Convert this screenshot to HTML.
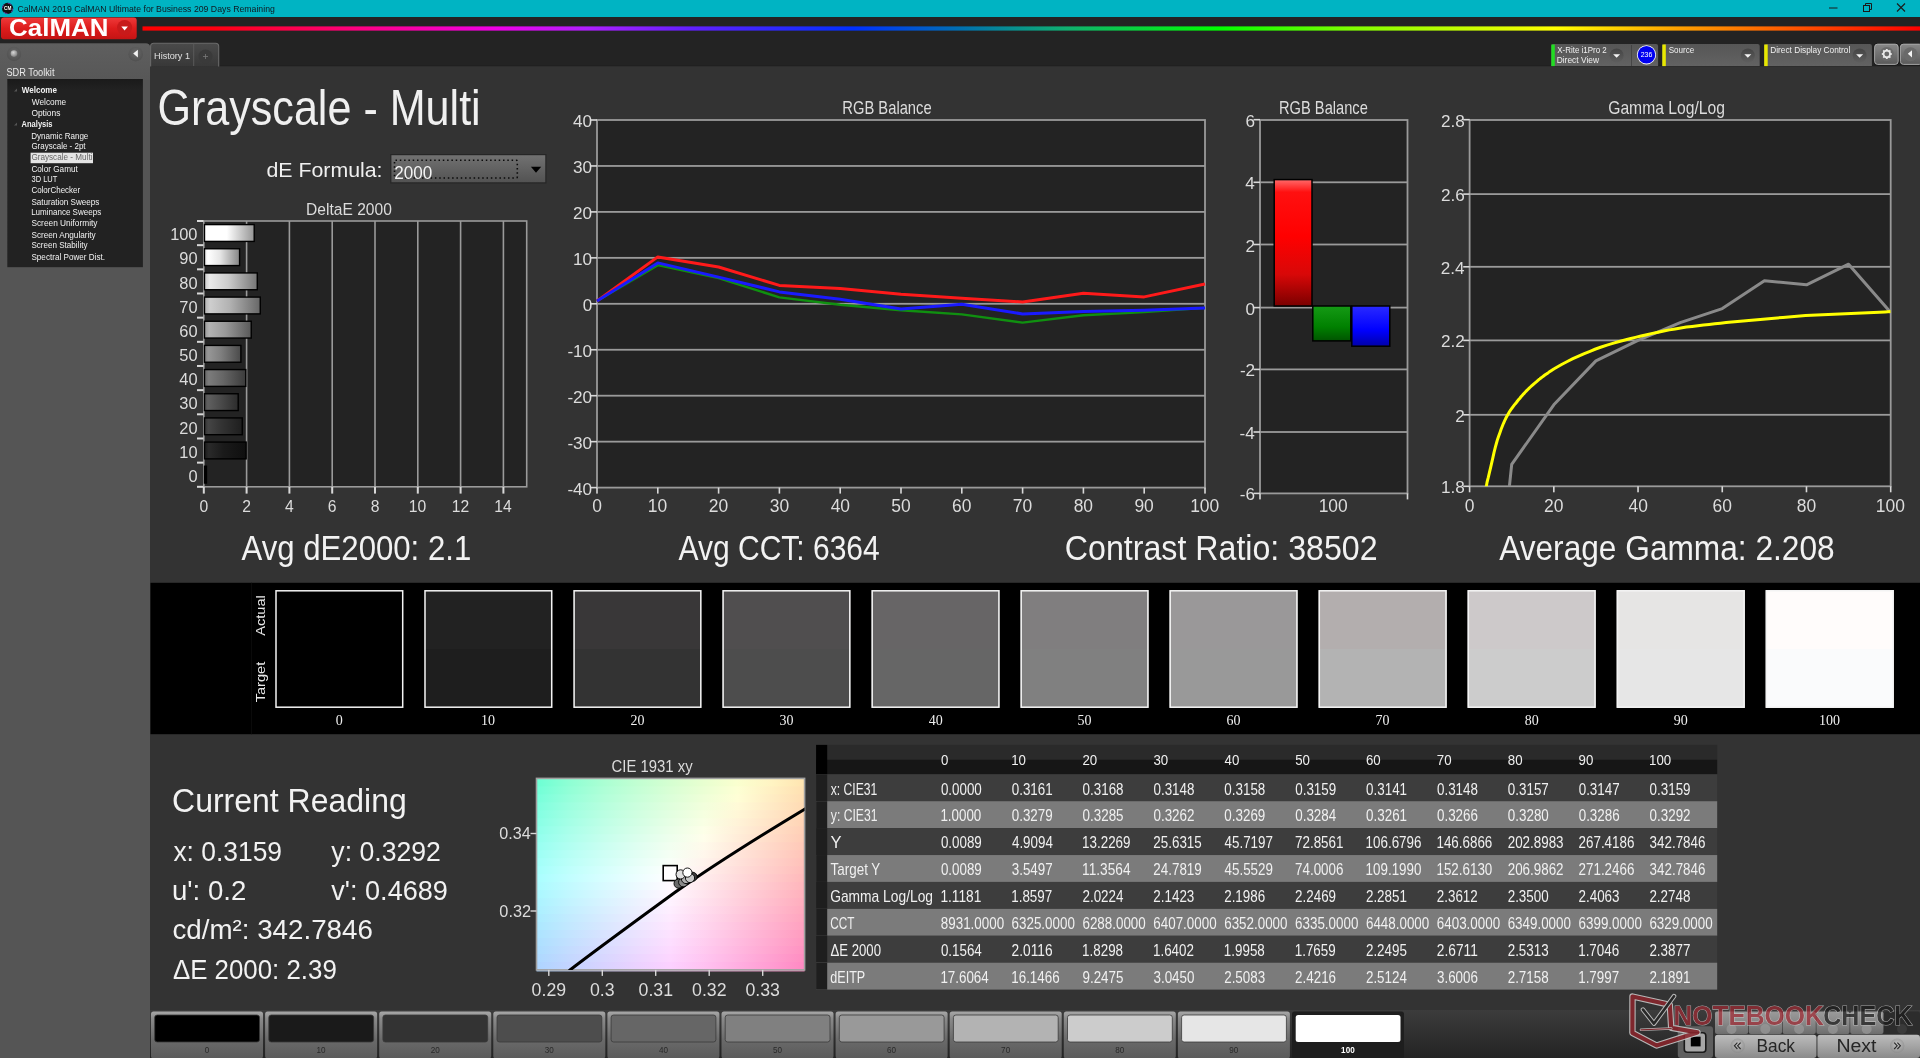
<!DOCTYPE html><html><head><meta charset="utf-8"><style>html,body{margin:0;padding:0;background:#333;}body{width:1920px;height:1058px;overflow:hidden;}svg{display:block;will-change:transform;font-family:"Liberation Sans", sans-serif;}</style></head><body><svg width="1920" height="1058" viewBox="0 0 1920 1058"><defs><linearGradient id="gRed" x1="0" y1="0" x2="0" y2="1"><stop offset="0" stop-color="#ee3a3a"/><stop offset="0.5" stop-color="#dd1c1c"/><stop offset="1" stop-color="#c41414"/></linearGradient><linearGradient id="gRainbow" gradientUnits="userSpaceOnUse" x1="142.5" y1="0" x2="1920" y2="0"><stop offset="0" stop-color="#ff0000"/><stop offset="0.04" stop-color="#ff0010"/><stop offset="0.12" stop-color="#ff0080"/><stop offset="0.20" stop-color="#f000e8"/><stop offset="0.25" stop-color="#b020ff"/><stop offset="0.31" stop-color="#6020ff"/><stop offset="0.40" stop-color="#0030ff"/><stop offset="0.46" stop-color="#0070b0"/><stop offset="0.52" stop-color="#10b070"/><stop offset="0.605" stop-color="#00ff00"/><stop offset="0.68" stop-color="#80ff00"/><stop offset="0.795" stop-color="#ffff00"/><stop offset="0.865" stop-color="#ffa000"/><stop offset="0.92" stop-color="#ff6000"/><stop offset="1" stop-color="#ff0000"/></linearGradient><linearGradient id="gSide" x1="0" y1="0" x2="0" y2="1"><stop offset="0" stop-color="#5f5f5f"/><stop offset="1" stop-color="#575757"/></linearGradient><radialGradient id="gBtnC" cx="0.5" cy="0.4" r="0.6"><stop offset="0" stop-color="#6a6a6a"/><stop offset="1" stop-color="#505050"/></radialGradient><radialGradient id="gBall" cx="0.4" cy="0.35" r="0.7"><stop offset="0" stop-color="#d8d8d8"/><stop offset="1" stop-color="#7a7a7a"/></radialGradient><linearGradient id="gTree" x1="0" y1="0" x2="0" y2="1"><stop offset="0" stop-color="#1a1a1a"/><stop offset="0.06" stop-color="#222222"/><stop offset="1" stop-color="#222222"/></linearGradient><linearGradient id="gTab" x1="0" y1="0" x2="0" y2="1"><stop offset="0" stop-color="#4a4a4a"/><stop offset="1" stop-color="#383838"/></linearGradient><linearGradient id="gTB" x1="0" y1="0" x2="0" y2="1"><stop offset="0" stop-color="#565656"/><stop offset="1" stop-color="#626262"/></linearGradient><linearGradient id="gDD" x1="0" y1="0" x2="0" y2="1"><stop offset="0" stop-color="#444444"/><stop offset="1" stop-color="#5e5e5e"/></linearGradient><linearGradient id="gGB" x1="0" y1="0" x2="0" y2="1"><stop offset="0" stop-color="#888"/><stop offset="1" stop-color="#5a5a5a"/></linearGradient><linearGradient id="gDrop" x1="0" y1="0" x2="0" y2="1"><stop offset="0" stop-color="#727272"/><stop offset="1" stop-color="#525252"/></linearGradient><linearGradient id="gB0" x1="0" y1="0" x2="1" y2="0"><stop offset="0" stop-color="rgb(0,0,0)"/><stop offset="0.1" stop-color="rgb(14,14,14)"/><stop offset="0.45" stop-color="rgb(0,0,0)"/><stop offset="1" stop-color="rgb(0,0,0)"/></linearGradient><linearGradient id="gB10" x1="0" y1="0" x2="1" y2="0"><stop offset="0" stop-color="rgb(26,26,26)"/><stop offset="0.1" stop-color="rgb(42,42,42)"/><stop offset="0.45" stop-color="rgb(26,26,26)"/><stop offset="1" stop-color="rgb(15,15,15)"/></linearGradient><linearGradient id="gB20" x1="0" y1="0" x2="1" y2="0"><stop offset="0" stop-color="rgb(51,51,51)"/><stop offset="0.1" stop-color="rgb(69,69,69)"/><stop offset="0.45" stop-color="rgb(51,51,51)"/><stop offset="1" stop-color="rgb(30,30,30)"/></linearGradient><linearGradient id="gB30" x1="0" y1="0" x2="1" y2="0"><stop offset="0" stop-color="rgb(76,76,76)"/><stop offset="0.1" stop-color="rgb(96,96,96)"/><stop offset="0.45" stop-color="rgb(76,76,76)"/><stop offset="1" stop-color="rgb(44,44,44)"/></linearGradient><linearGradient id="gB40" x1="0" y1="0" x2="1" y2="0"><stop offset="0" stop-color="rgb(102,102,102)"/><stop offset="0.1" stop-color="rgb(124,124,124)"/><stop offset="0.45" stop-color="rgb(102,102,102)"/><stop offset="1" stop-color="rgb(59,59,59)"/></linearGradient><linearGradient id="gB50" x1="0" y1="0" x2="1" y2="0"><stop offset="0" stop-color="rgb(127,127,127)"/><stop offset="0.1" stop-color="rgb(151,151,151)"/><stop offset="0.45" stop-color="rgb(127,127,127)"/><stop offset="1" stop-color="rgb(74,74,74)"/></linearGradient><linearGradient id="gB60" x1="0" y1="0" x2="1" y2="0"><stop offset="0" stop-color="rgb(153,153,153)"/><stop offset="0.1" stop-color="rgb(179,179,179)"/><stop offset="0.45" stop-color="rgb(153,153,153)"/><stop offset="1" stop-color="rgb(89,89,89)"/></linearGradient><linearGradient id="gB70" x1="0" y1="0" x2="1" y2="0"><stop offset="0" stop-color="rgb(178,178,178)"/><stop offset="0.1" stop-color="rgb(206,206,206)"/><stop offset="0.45" stop-color="rgb(178,178,178)"/><stop offset="1" stop-color="rgb(103,103,103)"/></linearGradient><linearGradient id="gB80" x1="0" y1="0" x2="1" y2="0"><stop offset="0" stop-color="rgb(204,204,204)"/><stop offset="0.1" stop-color="rgb(234,234,234)"/><stop offset="0.45" stop-color="rgb(204,204,204)"/><stop offset="1" stop-color="rgb(118,118,118)"/></linearGradient><linearGradient id="gB90" x1="0" y1="0" x2="1" y2="0"><stop offset="0" stop-color="rgb(229,229,229)"/><stop offset="0.1" stop-color="rgb(255,255,255)"/><stop offset="0.45" stop-color="rgb(229,229,229)"/><stop offset="1" stop-color="rgb(133,133,133)"/></linearGradient><linearGradient id="gB100" x1="0" y1="0" x2="1" y2="0"><stop offset="0" stop-color="rgb(255,255,255)"/><stop offset="0.1" stop-color="rgb(255,255,255)"/><stop offset="0.45" stop-color="rgb(255,255,255)"/><stop offset="1" stop-color="rgb(148,148,148)"/></linearGradient><linearGradient id="gBR" x1="0" y1="0" x2="0" y2="1"><stop offset="0" stop-color="#ff6a6a"/><stop offset="0.1" stop-color="#ff1010"/><stop offset="0.45" stop-color="#ff0000"/><stop offset="0.75" stop-color="#d80808"/><stop offset="1" stop-color="#7a0000"/></linearGradient><linearGradient id="gBG" x1="0" y1="0" x2="0" y2="1"><stop offset="0" stop-color="#159a15"/><stop offset="0.6" stop-color="#008000"/><stop offset="1" stop-color="#005400"/></linearGradient><linearGradient id="gBB" x1="0" y1="0" x2="0" y2="1"><stop offset="0" stop-color="#2a2aff"/><stop offset="0.6" stop-color="#0000ff"/><stop offset="1" stop-color="#0000a8"/></linearGradient><clipPath id="cpG"><rect x="1469.6" y="120.0" width="421.1" height="366.3"/></clipPath><linearGradient id="gC0" x1="0" y1="0" x2="1" y2="0"><stop offset="0.000" stop-color="#6cffd4"/><stop offset="0.125" stop-color="#8fffd4"/><stop offset="0.250" stop-color="#aaffd3"/><stop offset="0.375" stop-color="#c1ffd2"/><stop offset="0.500" stop-color="#d5ffd1"/><stop offset="0.625" stop-color="#e8ffd0"/><stop offset="0.750" stop-color="#faffcf"/><stop offset="0.875" stop-color="#fff4c3"/><stop offset="1.000" stop-color="#ffe4b0"/></linearGradient><linearGradient id="gC1" x1="0" y1="0" x2="1" y2="0"><stop offset="0.000" stop-color="#72ffd8"/><stop offset="0.125" stop-color="#93ffd7"/><stop offset="0.250" stop-color="#aeffd7"/><stop offset="0.375" stop-color="#c4ffd6"/><stop offset="0.500" stop-color="#d9ffd5"/><stop offset="0.625" stop-color="#ebffd4"/><stop offset="0.750" stop-color="#fdffd4"/><stop offset="0.875" stop-color="#fff0c3"/><stop offset="1.000" stop-color="#ffe0b1"/></linearGradient><linearGradient id="gC2" x1="0" y1="0" x2="1" y2="0"><stop offset="0.000" stop-color="#78ffdc"/><stop offset="0.125" stop-color="#98ffdb"/><stop offset="0.250" stop-color="#b2ffda"/><stop offset="0.375" stop-color="#c8ffda"/><stop offset="0.500" stop-color="#dcffd9"/><stop offset="0.625" stop-color="#efffd8"/><stop offset="0.750" stop-color="#fffed6"/><stop offset="0.875" stop-color="#ffedc4"/><stop offset="1.000" stop-color="#ffddb2"/></linearGradient><linearGradient id="gC3" x1="0" y1="0" x2="1" y2="0"><stop offset="0.000" stop-color="#7effdf"/><stop offset="0.125" stop-color="#9dffdf"/><stop offset="0.250" stop-color="#b6ffde"/><stop offset="0.375" stop-color="#ccffde"/><stop offset="0.500" stop-color="#e0ffdd"/><stop offset="0.625" stop-color="#f2ffdc"/><stop offset="0.750" stop-color="#fffad7"/><stop offset="0.875" stop-color="#ffeac5"/><stop offset="1.000" stop-color="#ffdab3"/></linearGradient><linearGradient id="gC4" x1="0" y1="0" x2="1" y2="0"><stop offset="0.000" stop-color="#83ffe3"/><stop offset="0.125" stop-color="#a1ffe2"/><stop offset="0.250" stop-color="#baffe2"/><stop offset="0.375" stop-color="#d0ffe1"/><stop offset="0.500" stop-color="#e3ffe1"/><stop offset="0.625" stop-color="#f6ffe0"/><stop offset="0.750" stop-color="#fff7d7"/><stop offset="0.875" stop-color="#ffe6c6"/><stop offset="1.000" stop-color="#ffd6b4"/></linearGradient><linearGradient id="gC5" x1="0" y1="0" x2="1" y2="0"><stop offset="0.000" stop-color="#88ffe6"/><stop offset="0.125" stop-color="#a5ffe6"/><stop offset="0.250" stop-color="#beffe6"/><stop offset="0.375" stop-color="#d3ffe5"/><stop offset="0.500" stop-color="#e7ffe5"/><stop offset="0.625" stop-color="#f9ffe4"/><stop offset="0.750" stop-color="#fff3d8"/><stop offset="0.875" stop-color="#ffe3c6"/><stop offset="1.000" stop-color="#ffd3b5"/></linearGradient><linearGradient id="gC6" x1="0" y1="0" x2="1" y2="0"><stop offset="0.000" stop-color="#8dffea"/><stop offset="0.125" stop-color="#aaffea"/><stop offset="0.250" stop-color="#c2ffe9"/><stop offset="0.375" stop-color="#d7ffe9"/><stop offset="0.500" stop-color="#ebffe9"/><stop offset="0.625" stop-color="#fdffe8"/><stop offset="0.750" stop-color="#fff0d9"/><stop offset="0.875" stop-color="#ffdfc7"/><stop offset="1.000" stop-color="#ffcfb6"/></linearGradient><linearGradient id="gC7" x1="0" y1="0" x2="1" y2="0"><stop offset="0.000" stop-color="#92ffee"/><stop offset="0.125" stop-color="#aeffed"/><stop offset="0.250" stop-color="#c6ffed"/><stop offset="0.375" stop-color="#dbffed"/><stop offset="0.500" stop-color="#eeffed"/><stop offset="0.625" stop-color="#fffeeb"/><stop offset="0.750" stop-color="#ffedd9"/><stop offset="0.875" stop-color="#ffdcc8"/><stop offset="1.000" stop-color="#ffccb6"/></linearGradient><linearGradient id="gC8" x1="0" y1="0" x2="1" y2="0"><stop offset="0.000" stop-color="#97fff1"/><stop offset="0.125" stop-color="#b2fff1"/><stop offset="0.250" stop-color="#cafff1"/><stop offset="0.375" stop-color="#dffff1"/><stop offset="0.500" stop-color="#f2fff0"/><stop offset="0.625" stop-color="#fffaeb"/><stop offset="0.750" stop-color="#ffe9da"/><stop offset="0.875" stop-color="#ffd8c8"/><stop offset="1.000" stop-color="#ffc8b7"/></linearGradient><linearGradient id="gC9" x1="0" y1="0" x2="1" y2="0"><stop offset="0.000" stop-color="#9cfff5"/><stop offset="0.125" stop-color="#b7fff5"/><stop offset="0.250" stop-color="#cefff5"/><stop offset="0.375" stop-color="#e2fff4"/><stop offset="0.500" stop-color="#f5fff4"/><stop offset="0.625" stop-color="#fff7ec"/><stop offset="0.750" stop-color="#ffe5da"/><stop offset="0.875" stop-color="#ffd5c9"/><stop offset="1.000" stop-color="#ffc4b8"/></linearGradient><linearGradient id="gC10" x1="0" y1="0" x2="1" y2="0"><stop offset="0.000" stop-color="#a1fff9"/><stop offset="0.125" stop-color="#bbfff8"/><stop offset="0.250" stop-color="#d1fff8"/><stop offset="0.375" stop-color="#e6fff8"/><stop offset="0.500" stop-color="#f9fff8"/><stop offset="0.625" stop-color="#fff3ec"/><stop offset="0.750" stop-color="#ffe2db"/><stop offset="0.875" stop-color="#ffd1ca"/><stop offset="1.000" stop-color="#ffc1b9"/></linearGradient><linearGradient id="gC11" x1="0" y1="0" x2="1" y2="0"><stop offset="0.000" stop-color="#a5fffc"/><stop offset="0.125" stop-color="#bffffc"/><stop offset="0.250" stop-color="#d5fffc"/><stop offset="0.375" stop-color="#eafffc"/><stop offset="0.500" stop-color="#fdfffc"/><stop offset="0.625" stop-color="#fff0ed"/><stop offset="0.750" stop-color="#ffdedb"/><stop offset="0.875" stop-color="#ffceca"/><stop offset="1.000" stop-color="#ffbdba"/></linearGradient><linearGradient id="gC12" x1="0" y1="0" x2="1" y2="0"><stop offset="0.000" stop-color="#a9feff"/><stop offset="0.125" stop-color="#c2feff"/><stop offset="0.250" stop-color="#d8feff"/><stop offset="0.375" stop-color="#ecfeff"/><stop offset="0.500" stop-color="#fffeff"/><stop offset="0.625" stop-color="#ffeced"/><stop offset="0.750" stop-color="#ffdbdc"/><stop offset="0.875" stop-color="#ffcacb"/><stop offset="1.000" stop-color="#ffb9ba"/></linearGradient><linearGradient id="gC13" x1="0" y1="0" x2="1" y2="0"><stop offset="0.000" stop-color="#aafbff"/><stop offset="0.125" stop-color="#c2faff"/><stop offset="0.250" stop-color="#d8faff"/><stop offset="0.375" stop-color="#ecfaff"/><stop offset="0.500" stop-color="#fffaff"/><stop offset="0.625" stop-color="#ffe8ed"/><stop offset="0.750" stop-color="#ffd7dc"/><stop offset="0.875" stop-color="#ffc6cc"/><stop offset="1.000" stop-color="#ffb5bb"/></linearGradient><linearGradient id="gC14" x1="0" y1="0" x2="1" y2="0"><stop offset="0.000" stop-color="#aaf7ff"/><stop offset="0.125" stop-color="#c2f7ff"/><stop offset="0.250" stop-color="#d8f7ff"/><stop offset="0.375" stop-color="#ecf6ff"/><stop offset="0.500" stop-color="#fff6ff"/><stop offset="0.625" stop-color="#ffe5ee"/><stop offset="0.750" stop-color="#ffd3dd"/><stop offset="0.875" stop-color="#ffc2cc"/><stop offset="1.000" stop-color="#ffb1bc"/></linearGradient><linearGradient id="gC15" x1="0" y1="0" x2="1" y2="0"><stop offset="0.000" stop-color="#aaf3ff"/><stop offset="0.125" stop-color="#c3f3ff"/><stop offset="0.250" stop-color="#d8f3ff"/><stop offset="0.375" stop-color="#ecf2ff"/><stop offset="0.500" stop-color="#fef2ff"/><stop offset="0.625" stop-color="#ffe1ee"/><stop offset="0.750" stop-color="#ffd0dd"/><stop offset="0.875" stop-color="#ffbecd"/><stop offset="1.000" stop-color="#ffadbd"/></linearGradient><linearGradient id="gC16" x1="0" y1="0" x2="1" y2="0"><stop offset="0.000" stop-color="#abf0ff"/><stop offset="0.125" stop-color="#c3efff"/><stop offset="0.250" stop-color="#d8efff"/><stop offset="0.375" stop-color="#ecefff"/><stop offset="0.500" stop-color="#feeeff"/><stop offset="0.625" stop-color="#ffddef"/><stop offset="0.750" stop-color="#ffccde"/><stop offset="0.875" stop-color="#ffbace"/><stop offset="1.000" stop-color="#ffa9bd"/></linearGradient><linearGradient id="gC17" x1="0" y1="0" x2="1" y2="0"><stop offset="0.000" stop-color="#abecff"/><stop offset="0.125" stop-color="#c3ebff"/><stop offset="0.250" stop-color="#d8ebff"/><stop offset="0.375" stop-color="#ecebff"/><stop offset="0.500" stop-color="#feeaff"/><stop offset="0.625" stop-color="#ffd9ef"/><stop offset="0.750" stop-color="#ffc8de"/><stop offset="0.875" stop-color="#ffb6ce"/><stop offset="1.000" stop-color="#ffa5be"/></linearGradient><linearGradient id="gC18" x1="0" y1="0" x2="1" y2="0"><stop offset="0.000" stop-color="#abe8ff"/><stop offset="0.125" stop-color="#c3e8ff"/><stop offset="0.250" stop-color="#d8e7ff"/><stop offset="0.375" stop-color="#ece7ff"/><stop offset="0.500" stop-color="#fee6ff"/><stop offset="0.625" stop-color="#ffd6ef"/><stop offset="0.750" stop-color="#ffc4df"/><stop offset="0.875" stop-color="#ffb2cf"/><stop offset="1.000" stop-color="#ffa1bf"/></linearGradient><linearGradient id="gC19" x1="0" y1="0" x2="1" y2="0"><stop offset="0.000" stop-color="#ace4ff"/><stop offset="0.125" stop-color="#c3e4ff"/><stop offset="0.250" stop-color="#d8e3ff"/><stop offset="0.375" stop-color="#ebe3ff"/><stop offset="0.500" stop-color="#fde2ff"/><stop offset="0.625" stop-color="#ffd2f0"/><stop offset="0.750" stop-color="#ffc0df"/><stop offset="0.875" stop-color="#ffaecf"/><stop offset="1.000" stop-color="#ff9cbf"/></linearGradient><linearGradient id="gC20" x1="0" y1="0" x2="1" y2="0"><stop offset="0.000" stop-color="#ace0ff"/><stop offset="0.125" stop-color="#c3e0ff"/><stop offset="0.250" stop-color="#d8dfff"/><stop offset="0.375" stop-color="#ebdfff"/><stop offset="0.500" stop-color="#fddeff"/><stop offset="0.625" stop-color="#ffcef0"/><stop offset="0.750" stop-color="#ffbce0"/><stop offset="0.875" stop-color="#ffaad0"/><stop offset="1.000" stop-color="#ff98c0"/></linearGradient><linearGradient id="gC21" x1="0" y1="0" x2="1" y2="0"><stop offset="0.000" stop-color="#acddff"/><stop offset="0.125" stop-color="#c4dcff"/><stop offset="0.250" stop-color="#d8dbff"/><stop offset="0.375" stop-color="#ebdbff"/><stop offset="0.500" stop-color="#fddaff"/><stop offset="0.625" stop-color="#ffcaf0"/><stop offset="0.750" stop-color="#ffb8e0"/><stop offset="0.875" stop-color="#ffa6d0"/><stop offset="1.000" stop-color="#ff93c1"/></linearGradient><linearGradient id="gC22" x1="0" y1="0" x2="1" y2="0"><stop offset="0.000" stop-color="#add9ff"/><stop offset="0.125" stop-color="#c4d8ff"/><stop offset="0.250" stop-color="#d8d7ff"/><stop offset="0.375" stop-color="#ebd6ff"/><stop offset="0.500" stop-color="#fdd6ff"/><stop offset="0.625" stop-color="#ffc6f1"/><stop offset="0.750" stop-color="#ffb4e1"/><stop offset="0.875" stop-color="#ffa1d1"/><stop offset="1.000" stop-color="#ff8ec1"/></linearGradient><linearGradient id="gC23" x1="0" y1="0" x2="1" y2="0"><stop offset="0.000" stop-color="#add5ff"/><stop offset="0.125" stop-color="#c4d4ff"/><stop offset="0.250" stop-color="#d8d3ff"/><stop offset="0.375" stop-color="#ebd2ff"/><stop offset="0.500" stop-color="#fcd1ff"/><stop offset="0.625" stop-color="#ffc2f1"/><stop offset="0.750" stop-color="#ffafe1"/><stop offset="0.875" stop-color="#ff9dd2"/><stop offset="1.000" stop-color="#ff89c2"/></linearGradient><clipPath id="cpC"><rect x="536.5" y="778.4" width="268.1" height="191.5"/></clipPath><linearGradient id="gBot" x1="0" y1="0" x2="0" y2="1"><stop offset="0" stop-color="#a8a8a8"/><stop offset="0.15" stop-color="#8a8a8a"/><stop offset="0.6" stop-color="#6a6a6a"/><stop offset="1" stop-color="#5a5a5a"/></linearGradient><linearGradient id="gBotBar" x1="0" y1="0" x2="0" y2="1"><stop offset="0" stop-color="#3c3c3c"/><stop offset="1" stop-color="#242424"/></linearGradient><linearGradient id="gNav" x1="0" y1="0" x2="0" y2="1"><stop offset="0" stop-color="#bcbcbc"/><stop offset="0.5" stop-color="#a4a4a4"/><stop offset="1" stop-color="#8a8a8a"/></linearGradient><linearGradient id="gSm" x1="0" y1="0" x2="0" y2="1"><stop offset="0" stop-color="#9a9a9a"/><stop offset="0.5" stop-color="#888888"/><stop offset="1" stop-color="#6e6e6e"/></linearGradient><radialGradient id="gNC" cx="0.5" cy="0.4" r="0.6"><stop offset="0" stop-color="#c4c4c4"/><stop offset="1" stop-color="#8e8e8e"/></radialGradient></defs><rect x="0" y="0" width="1920" height="1058" fill="#333333"/>
<rect x="0" y="0" width="1920" height="17" fill="#00b4c3"/>
<circle cx="7.6" cy="8.4" r="5.6" fill="#111"/>
<circle cx="7.6" cy="8.4" r="5.2" fill="none" stroke="#7a3bbd" stroke-width="0.8" stroke-dasharray="4 4"/>
<text x="4.01" y="10.30" font-size="5.23" fill="#fff" font-weight="bold" textLength="7.31" lengthAdjust="spacingAndGlyphs" >CM</text>
<text x="17.46" y="11.70" font-size="9.16" fill="#101820" textLength="257.41" lengthAdjust="spacingAndGlyphs" >CalMAN 2019 CalMAN Ultimate for Business 209 Days Remaining</text>
<rect x="1829" y="7.5" width="8.5" height="1" fill="#1a1a1a"/>
<rect x="1863.5" y="5.5" width="6" height="6" fill="none" stroke="#1a1a1a" stroke-width="1"/>
<path d="M1865.5 5.5 V3.5 H1871.5 V9.5 H1869.5" fill="none" stroke="#1a1a1a" stroke-width="1"/>
<path d="M1897 3.5 L1905 11.5 M1905 3.5 L1897 11.5" stroke="#1a1a1a" stroke-width="1.1"/>
<rect x="0" y="17" width="1920" height="49" fill="#232323"/><rect x="150" y="65.5" width="1770" height="1" fill="#1e1e1e"/><rect x="150" y="66.5" width="1770" height="991.5" fill="#333333"/>
<rect x="1" y="17.5" width="135.7" height="21.8" rx="3" fill="url(#gRed)"/>
<text x="9.14" y="36.20" font-size="23.98" fill="#ffffff" font-weight="bold" textLength="99.21" lengthAdjust="spacingAndGlyphs" >CalMAN</text>
<circle cx="124.6" cy="27.6" r="7.6" fill="#c81a1a"/>
<path d="M121.3 26.6 H127.9 L124.6 30.4 Z" fill="#fff"/>
<rect x="142.5" y="26.4" width="1777.5" height="4.2" fill="url(#gRainbow)"/>
<path d="M0 43.5 H146 Q150 43.5 150 47.5 V1058 H0 Z" fill="#555555"/>
<path d="M0 43.5 H146 Q150 43.5 150 47.5 V80 H0 Z" fill="url(#gSide)"/>
<circle cx="14" cy="54" r="7.2" fill="url(#gBtnC)"/>
<circle cx="14" cy="53.6" r="3.3" fill="url(#gBall)"/>
<circle cx="135.7" cy="54.2" r="7.3" fill="url(#gBtnC)"/>
<path d="M137.9 49.8 V57.4 L133.2 53.6 Z" fill="#f4f4f4"/>
<text x="6.39" y="75.80" font-size="10.76" fill="#e8e8e8" textLength="48.08" lengthAdjust="spacingAndGlyphs" >SDR Toolkit</text>
<rect x="7.3" y="79" width="135.6" height="188.2" fill="url(#gTree)"/>
<rect x="30.6" y="152.7" width="62.4" height="10.5" fill="#e4e4e4"/>
<text x="21.79" y="92.60" font-size="8.87" fill="#f2f2f2" font-weight="bold" textLength="35.18" lengthAdjust="spacingAndGlyphs" >Welcome</text>
<text x="31.76" y="104.60" font-size="8.87" fill="#f2f2f2" textLength="34.40" lengthAdjust="spacingAndGlyphs" >Welcome</text>
<text x="31.40" y="115.50" font-size="8.87" fill="#f2f2f2" textLength="29.00" lengthAdjust="spacingAndGlyphs" >Options</text>
<text x="21.61" y="126.60" font-size="8.87" fill="#f2f2f2" font-weight="bold" textLength="30.90" lengthAdjust="spacingAndGlyphs" >Analysis</text>
<text x="31.14" y="138.70" font-size="8.87" fill="#f2f2f2" textLength="57.22" lengthAdjust="spacingAndGlyphs" >Dynamic Range</text>
<text x="31.40" y="149.30" font-size="8.87" fill="#f2f2f2" textLength="54.16" lengthAdjust="spacingAndGlyphs" >Grayscale - 2pt</text>
<text x="31.39" y="160.20" font-size="8.87" fill="#666666" textLength="61.16" lengthAdjust="spacingAndGlyphs" >Grayscale - Multi</text>
<text x="31.38" y="171.50" font-size="8.87" fill="#f2f2f2" textLength="46.48" lengthAdjust="spacingAndGlyphs" >Color Gamut</text>
<text x="31.51" y="182.20" font-size="8.87" fill="#f2f2f2" textLength="25.86" lengthAdjust="spacingAndGlyphs" >3D LUT</text>
<text x="31.39" y="193.30" font-size="8.87" fill="#f2f2f2" textLength="48.84" lengthAdjust="spacingAndGlyphs" >ColorChecker</text>
<text x="31.43" y="204.90" font-size="8.87" fill="#f2f2f2" textLength="67.96" lengthAdjust="spacingAndGlyphs" >Saturation Sweeps</text>
<text x="31.14" y="215.30" font-size="8.87" fill="#f2f2f2" textLength="70.05" lengthAdjust="spacingAndGlyphs" >Luminance Sweeps</text>
<text x="31.42" y="226.40" font-size="8.87" fill="#f2f2f2" textLength="66.09" lengthAdjust="spacingAndGlyphs" >Screen Uniformity</text>
<text x="31.43" y="237.80" font-size="8.87" fill="#f2f2f2" textLength="64.29" lengthAdjust="spacingAndGlyphs" >Screen Angularity</text>
<text x="31.43" y="248.00" font-size="8.87" fill="#f2f2f2" textLength="56.08" lengthAdjust="spacingAndGlyphs" >Screen Stability</text>
<text x="31.43" y="259.50" font-size="8.87" fill="#f2f2f2" textLength="73.61" lengthAdjust="spacingAndGlyphs" >Spectral Power Dist.</text>
<path d="M14 91.5 L17 88.5 V91.5 Z" fill="#555"/>
<path d="M14 125.5 L17 122.5 V125.5 Z" fill="#555"/>
<path d="M150.6 66.5 V46.5 Q150.6 43.3 153.8 43.3 H215.5 Q218.7 43.3 218.7 46.5 V66.5 Z" fill="url(#gTab)"/>
<path d="M150.6 66.5 V46.5 Q150.6 43.3 153.8 43.3 H215.5 Q218.7 43.3 218.7 46.5 V66.5" fill="none" stroke="#6a6a6a" stroke-width="1.1"/>
<rect x="193.2" y="43.5" width="1" height="22.5" fill="#5a5a5a"/>
<text x="154.05" y="58.70" font-size="8.72" fill="#e0e0e0" textLength="35.99" lengthAdjust="spacingAndGlyphs" >History 1</text>
<circle cx="205.5" cy="56.5" r="7" fill="#3a3a3a"/>
<path d="M205.5 54 V59 M203 56.5 H208" stroke="#777" stroke-width="0.8"/>
<path d="M1551.3 66.1 V46 Q1551.3 43.9 1553.3 43.9 H1656.1 Q1658.1 43.9 1658.1 46 V66.1 Z" fill="url(#gTB)"/><rect x="1551.3" y="44.5" width="3.5" height="21.6" fill="#22dd22"/>
<text x="1557.22" y="52.80" font-size="8.58" fill="#f0f0f0" textLength="49.48" lengthAdjust="spacingAndGlyphs" >X-Rite i1Pro 2</text>
<text x="1556.71" y="63.10" font-size="8.58" fill="#f0f0f0" textLength="42.27" lengthAdjust="spacingAndGlyphs" >Direct View</text>
<circle cx="1616.6" cy="55.5" r="7" fill="url(#gDD)"/><path d="M1613.1 54.2 H1620.1 L1616.6 57.8 Z" fill="#f4f4f4"/>
<rect x="1631" y="45" width="0.8" height="21" fill="#404040"/>
<circle cx="1646.5" cy="54.8" r="9.6" fill="#ffffff"/><circle cx="1646.5" cy="54.8" r="8.8" fill="#0000f0"/>
<text x="1640.65" y="57.20" font-size="6.69" fill="#ffffff" textLength="11.66" lengthAdjust="spacingAndGlyphs" >236</text>
<path d="M1662.3 66.1 V46 Q1662.3 43.9 1664.3 43.9 H1757.7 Q1759.7 43.9 1759.7 46 V66.1 Z" fill="url(#gTB)"/><rect x="1662.3" y="44.5" width="3.5" height="21.6" fill="#e8e800"/>
<text x="1668.63" y="52.80" font-size="8.58" fill="#f0f0f0" textLength="25.52" lengthAdjust="spacingAndGlyphs" >Source</text>
<circle cx="1747.8" cy="55.5" r="7" fill="url(#gDD)"/><path d="M1744.3 54.2 H1751.3 L1747.8 57.8 Z" fill="#f4f4f4"/>
<path d="M1764.2 66.1 V46 Q1764.2 43.9 1766.2 43.9 H1869.9 Q1871.9 43.9 1871.9 46 V66.1 Z" fill="url(#gTB)"/><rect x="1764.2" y="44.5" width="3.5" height="21.6" fill="#e8e800"/>
<text x="1770.32" y="52.80" font-size="8.58" fill="#f0f0f0" textLength="79.93" lengthAdjust="spacingAndGlyphs" >Direct Display Control</text>
<circle cx="1859.6" cy="55.5" r="7" fill="url(#gDD)"/><path d="M1856.1 54.2 H1863.1 L1859.6 57.8 Z" fill="#f4f4f4"/>
<rect x="1873.8" y="43.3" width="25.2" height="21.9" rx="3.5" fill="#111"/>
<rect x="1899.6" y="43.3" width="23" height="21.9" rx="3.5" fill="#111"/>
<rect x="1874.6" y="44.1" width="23.6" height="20.3" rx="3" fill="url(#gGB)" stroke="#b0b0b0" stroke-width="0.9"/>
<rect x="1900.4" y="44.1" width="22" height="20.3" rx="3" fill="url(#gGB)" stroke="#b0b0b0" stroke-width="0.9"/>
<circle cx="1886.8" cy="54.0" r="7.0" fill="#6a6a6a"/>
<rect x="1885.9" y="49.0" width="1.8" height="2.2" fill="#e8e8e8" transform="rotate(0 1886.8 54.0)"/><rect x="1885.9" y="49.0" width="1.8" height="2.2" fill="#e8e8e8" transform="rotate(45 1886.8 54.0)"/><rect x="1885.9" y="49.0" width="1.8" height="2.2" fill="#e8e8e8" transform="rotate(90 1886.8 54.0)"/><rect x="1885.9" y="49.0" width="1.8" height="2.2" fill="#e8e8e8" transform="rotate(135 1886.8 54.0)"/><rect x="1885.9" y="49.0" width="1.8" height="2.2" fill="#e8e8e8" transform="rotate(180 1886.8 54.0)"/><rect x="1885.9" y="49.0" width="1.8" height="2.2" fill="#e8e8e8" transform="rotate(225 1886.8 54.0)"/><rect x="1885.9" y="49.0" width="1.8" height="2.2" fill="#e8e8e8" transform="rotate(270 1886.8 54.0)"/><rect x="1885.9" y="49.0" width="1.8" height="2.2" fill="#e8e8e8" transform="rotate(315 1886.8 54.0)"/><circle cx="1886.8" cy="54.0" r="3.3" fill="none" stroke="#e8e8e8" stroke-width="1.7"/>
<circle cx="1910.5" cy="54.3" r="7.0" fill="#6a6a6a"/><path d="M1912 50.2 V57.4 L1907.8 53.8 Z" fill="#f4f4f4"/>
<text x="157.43" y="124.80" font-size="50.87" fill="#f0f0f0" textLength="323.27" lengthAdjust="spacingAndGlyphs" >Grayscale - Multi</text>
<text x="266.40" y="177.40" font-size="20.78" fill="#f0f0f0" textLength="116.14" lengthAdjust="spacingAndGlyphs" >dE Formula:</text>
<rect x="390.8" y="154.6" width="155.1" height="28.3" fill="url(#gDrop)" stroke="#262626" stroke-width="1.2"/>
<rect x="394.5" y="160.2" width="122.8" height="17.8" rx="1" fill="none" stroke="#0a0a0a" stroke-width="1.6" stroke-dasharray="1.5 2.8"/>
<text x="394.14" y="178.50" font-size="19.19" fill="#f4f4f4" textLength="38.03" lengthAdjust="spacingAndGlyphs" >2000</text>
<path d="M530.9 166.7 H541.2 L536 172.8 Z" fill="#000"/>
<text x="306.12" y="215.20" font-size="16.86" fill="#dcdcdc" textLength="85.69" lengthAdjust="spacingAndGlyphs" >DeltaE 2000</text>
<rect x="203.8" y="221.0" width="322.90" height="265.80" fill="#232323"/><rect x="203.8" y="221.0" width="322.90" height="265.80" fill="none" stroke="#9a9a9a" stroke-width="1.6"/>
<rect x="245.80" y="221.0" width="1.6" height="265.8" fill="#9a9a9a"/>
<rect x="288.60" y="221.0" width="1.6" height="265.8" fill="#9a9a9a"/>
<rect x="331.40" y="221.0" width="1.6" height="265.8" fill="#9a9a9a"/>
<rect x="374.20" y="221.0" width="1.6" height="265.8" fill="#9a9a9a"/>
<rect x="417.00" y="221.0" width="1.6" height="265.8" fill="#9a9a9a"/>
<rect x="459.80" y="221.0" width="1.6" height="265.8" fill="#9a9a9a"/>
<rect x="502.60" y="221.0" width="1.6" height="265.8" fill="#9a9a9a"/>
<rect x="197" y="220.00" width="6.5" height="2.0" fill="#d8d8d8"/>
<rect x="197" y="244.16" width="6.5" height="2.0" fill="#d8d8d8"/>
<rect x="197" y="268.33" width="6.5" height="2.0" fill="#d8d8d8"/>
<rect x="197" y="292.49" width="6.5" height="2.0" fill="#d8d8d8"/>
<rect x="197" y="316.65" width="6.5" height="2.0" fill="#d8d8d8"/>
<rect x="197" y="340.82" width="6.5" height="2.0" fill="#d8d8d8"/>
<rect x="197" y="364.98" width="6.5" height="2.0" fill="#d8d8d8"/>
<rect x="197" y="389.15" width="6.5" height="2.0" fill="#d8d8d8"/>
<rect x="197" y="413.31" width="6.5" height="2.0" fill="#d8d8d8"/>
<rect x="197" y="437.47" width="6.5" height="2.0" fill="#d8d8d8"/>
<rect x="197" y="461.64" width="6.5" height="2.0" fill="#d8d8d8"/>
<rect x="197" y="485.80" width="6.5" height="2.0" fill="#d8d8d8"/>
<rect x="202.80" y="486.8" width="2.0" height="6.8" fill="#d8d8d8"/>
<text x="199.43" y="511.60" font-size="15.70" fill="#dcdcdc" >0</text>
<rect x="245.60" y="486.8" width="2.0" height="6.8" fill="#d8d8d8"/>
<text x="242.23" y="511.60" font-size="15.70" fill="#dcdcdc" >2</text>
<rect x="288.40" y="486.8" width="2.0" height="6.8" fill="#d8d8d8"/>
<text x="285.08" y="511.60" font-size="15.70" fill="#dcdcdc" >4</text>
<rect x="331.20" y="486.8" width="2.0" height="6.8" fill="#d8d8d8"/>
<text x="327.78" y="511.60" font-size="15.70" fill="#dcdcdc" >6</text>
<rect x="374.00" y="486.8" width="2.0" height="6.8" fill="#d8d8d8"/>
<text x="370.63" y="511.60" font-size="15.70" fill="#dcdcdc" >8</text>
<rect x="416.80" y="486.8" width="2.0" height="6.8" fill="#d8d8d8"/>
<text x="408.78" y="511.60" font-size="15.70" fill="#dcdcdc" >10</text>
<rect x="459.60" y="486.8" width="2.0" height="6.8" fill="#d8d8d8"/>
<text x="451.67" y="511.60" font-size="15.70" fill="#dcdcdc" >12</text>
<rect x="502.40" y="486.8" width="2.0" height="6.8" fill="#d8d8d8"/>
<text x="494.30" y="511.60" font-size="15.70" fill="#dcdcdc" >14</text>
<text x="188.41" y="481.94" font-size="16.42" fill="#dcdcdc" >0</text>
<rect x="204.50" y="466.24" width="1.95" height="16.8" fill="url(#gB0)" stroke="#000" stroke-width="1.4"/>
<text x="179.27" y="457.77" font-size="16.42" fill="#dcdcdc" >10</text>
<rect x="204.50" y="442.07" width="41.65" height="16.8" fill="url(#gB10)" stroke="#000" stroke-width="1.4"/>
<text x="179.27" y="433.61" font-size="16.42" fill="#dcdcdc" >20</text>
<rect x="204.50" y="417.91" width="37.76" height="16.8" fill="url(#gB20)" stroke="#000" stroke-width="1.4"/>
<text x="179.27" y="409.45" font-size="16.42" fill="#dcdcdc" >30</text>
<rect x="204.50" y="393.75" width="33.70" height="16.8" fill="url(#gB30)" stroke="#000" stroke-width="1.4"/>
<text x="179.27" y="385.28" font-size="16.42" fill="#dcdcdc" >40</text>
<rect x="204.50" y="369.58" width="41.31" height="16.8" fill="url(#gB40)" stroke="#000" stroke-width="1.4"/>
<text x="179.27" y="361.12" font-size="16.42" fill="#dcdcdc" >50</text>
<rect x="204.50" y="345.42" width="36.39" height="16.8" fill="url(#gB50)" stroke="#000" stroke-width="1.4"/>
<text x="179.27" y="336.95" font-size="16.42" fill="#dcdcdc" >60</text>
<rect x="204.50" y="321.25" width="46.74" height="16.8" fill="url(#gB60)" stroke="#000" stroke-width="1.4"/>
<text x="179.27" y="312.79" font-size="16.42" fill="#dcdcdc" >70</text>
<rect x="204.50" y="297.09" width="55.76" height="16.8" fill="url(#gB70)" stroke="#000" stroke-width="1.4"/>
<text x="179.27" y="288.63" font-size="16.42" fill="#dcdcdc" >80</text>
<rect x="204.50" y="272.93" width="52.77" height="16.8" fill="url(#gB80)" stroke="#000" stroke-width="1.4"/>
<text x="179.27" y="264.46" font-size="16.42" fill="#dcdcdc" >90</text>
<rect x="204.50" y="248.76" width="35.08" height="16.8" fill="url(#gB90)" stroke="#000" stroke-width="1.4"/>
<text x="170.14" y="240.30" font-size="16.42" fill="#dcdcdc" >100</text>
<rect x="204.50" y="224.60" width="49.70" height="16.8" fill="url(#gB100)" stroke="#000" stroke-width="1.4"/>
<text x="842.29" y="113.60" font-size="17.73" fill="#dcdcdc" textLength="89.37" lengthAdjust="spacingAndGlyphs" >RGB Balance</text>
<rect x="597.0" y="120.0" width="608.00" height="367.60" fill="#232323"/><rect x="597.0" y="120.0" width="608.00" height="367.60" fill="none" stroke="#9a9a9a" stroke-width="1.8"/>
<rect x="590.5" y="119.20" width="6.5" height="1.6" fill="#d8d8d8"/>
<text x="573.09" y="127.00" font-size="17.15" fill="#dcdcdc" >40</text>
<rect x="597.0" y="165.05" width="608.0" height="1.8" fill="#9a9a9a"/>
<rect x="590.5" y="165.15" width="6.5" height="1.6" fill="#d8d8d8"/>
<text x="573.09" y="172.95" font-size="17.15" fill="#dcdcdc" >30</text>
<rect x="597.0" y="211.00" width="608.0" height="1.8" fill="#9a9a9a"/>
<rect x="590.5" y="211.10" width="6.5" height="1.6" fill="#d8d8d8"/>
<text x="573.09" y="218.90" font-size="17.15" fill="#dcdcdc" >20</text>
<rect x="597.0" y="256.95" width="608.0" height="1.8" fill="#9a9a9a"/>
<rect x="590.5" y="257.05" width="6.5" height="1.6" fill="#d8d8d8"/>
<text x="573.09" y="264.85" font-size="17.15" fill="#dcdcdc" >10</text>
<rect x="597.0" y="302.90" width="608.0" height="1.8" fill="#9a9a9a"/>
<rect x="590.5" y="303.00" width="6.5" height="1.6" fill="#d8d8d8"/>
<text x="582.63" y="310.80" font-size="17.15" fill="#dcdcdc" >0</text>
<rect x="597.0" y="348.85" width="608.0" height="1.8" fill="#9a9a9a"/>
<rect x="590.5" y="348.95" width="6.5" height="1.6" fill="#d8d8d8"/>
<text x="567.38" y="356.75" font-size="17.15" fill="#dcdcdc" >-10</text>
<rect x="597.0" y="394.80" width="608.0" height="1.8" fill="#9a9a9a"/>
<rect x="590.5" y="394.90" width="6.5" height="1.6" fill="#d8d8d8"/>
<text x="567.38" y="402.70" font-size="17.15" fill="#dcdcdc" >-20</text>
<rect x="597.0" y="440.75" width="608.0" height="1.8" fill="#9a9a9a"/>
<rect x="590.5" y="440.85" width="6.5" height="1.6" fill="#d8d8d8"/>
<text x="567.38" y="448.65" font-size="17.15" fill="#dcdcdc" >-30</text>
<rect x="590.5" y="486.80" width="6.5" height="1.6" fill="#d8d8d8"/>
<text x="567.38" y="494.60" font-size="17.15" fill="#dcdcdc" >-40</text>
<rect x="596.20" y="487.6" width="1.6" height="6" fill="#d8d8d8"/>
<text x="592.15" y="512.00" font-size="17.44" fill="#dcdcdc" >0</text>
<rect x="657.00" y="487.6" width="1.6" height="6" fill="#d8d8d8"/>
<text x="647.78" y="512.00" font-size="17.44" fill="#dcdcdc" >10</text>
<rect x="717.80" y="487.6" width="1.6" height="6" fill="#d8d8d8"/>
<text x="708.80" y="512.00" font-size="17.44" fill="#dcdcdc" >20</text>
<rect x="778.60" y="487.6" width="1.6" height="6" fill="#d8d8d8"/>
<text x="769.71" y="512.00" font-size="17.44" fill="#dcdcdc" >30</text>
<rect x="839.40" y="487.6" width="1.6" height="6" fill="#d8d8d8"/>
<text x="830.64" y="512.00" font-size="17.44" fill="#dcdcdc" >40</text>
<rect x="900.20" y="487.6" width="1.6" height="6" fill="#d8d8d8"/>
<text x="891.29" y="512.00" font-size="17.44" fill="#dcdcdc" >50</text>
<rect x="961.00" y="487.6" width="1.6" height="6" fill="#d8d8d8"/>
<text x="952.00" y="512.00" font-size="17.44" fill="#dcdcdc" >60</text>
<rect x="1021.80" y="487.6" width="1.6" height="6" fill="#d8d8d8"/>
<text x="1012.79" y="512.00" font-size="17.44" fill="#dcdcdc" >70</text>
<rect x="1082.60" y="487.6" width="1.6" height="6" fill="#d8d8d8"/>
<text x="1073.66" y="512.00" font-size="17.44" fill="#dcdcdc" >80</text>
<rect x="1143.40" y="487.6" width="1.6" height="6" fill="#d8d8d8"/>
<text x="1134.43" y="512.00" font-size="17.44" fill="#dcdcdc" >90</text>
<rect x="1204.20" y="487.6" width="1.6" height="6" fill="#d8d8d8"/>
<text x="1190.13" y="512.00" font-size="17.44" fill="#dcdcdc" >100</text>
<polyline points="597.0,301.0 657.8,265.2 718.6,278.1 779.4,297.4 840.2,304.7 901.0,310.2 961.8,314.4 1022.6,322.6 1083.4,315.3 1144.2,312.1 1205.0,307.9" fill="none" stroke="#109010" stroke-width="2.4" stroke-linejoin="round"/>
<polyline points="597.0,301.0 657.8,256.9 718.6,267.0 779.4,285.4 840.2,288.6 901.0,294.2 961.8,298.3 1022.6,302.0 1083.4,293.2 1144.2,296.9 1205.0,284.0" fill="none" stroke="#ff1a1a" stroke-width="3.0" stroke-linejoin="round"/>
<polyline points="597.0,301.0 657.8,262.9 718.6,277.1 779.4,291.9 840.2,299.2 901.0,308.9 961.8,304.3 1022.6,313.9 1083.4,311.6 1144.2,310.2 1205.0,307.9" fill="none" stroke="#1a1aff" stroke-width="3.0" stroke-linejoin="round"/>
<text x="1279.00" y="113.60" font-size="17.73" fill="#dcdcdc" textLength="88.85" lengthAdjust="spacingAndGlyphs" >RGB Balance</text>
<rect x="1260.0" y="120.0" width="147.50" height="373.40" fill="#232323"/><rect x="1260.0" y="120.0" width="147.50" height="373.40" fill="none" stroke="#9a9a9a" stroke-width="1.8"/>
<rect x="1253.5" y="118.90" width="6.5" height="1.6" fill="#d8d8d8"/>
<text x="1245.52" y="126.70" font-size="17.15" fill="#dcdcdc" >6</text>
<rect x="1260.0" y="181.40" width="147.5" height="1.8" fill="#9a9a9a"/>
<rect x="1253.5" y="181.50" width="6.5" height="1.6" fill="#d8d8d8"/>
<text x="1245.26" y="189.30" font-size="17.15" fill="#dcdcdc" >4</text>
<rect x="1260.0" y="243.60" width="147.5" height="1.8" fill="#9a9a9a"/>
<rect x="1253.5" y="243.70" width="6.5" height="1.6" fill="#d8d8d8"/>
<text x="1245.62" y="251.50" font-size="17.15" fill="#dcdcdc" >2</text>
<rect x="1260.0" y="306.70" width="147.5" height="1.8" fill="#9a9a9a"/>
<rect x="1253.5" y="306.80" width="6.5" height="1.6" fill="#d8d8d8"/>
<text x="1245.43" y="314.60" font-size="17.15" fill="#dcdcdc" >0</text>
<rect x="1260.0" y="368.50" width="147.5" height="1.8" fill="#9a9a9a"/>
<rect x="1253.5" y="368.60" width="6.5" height="1.6" fill="#d8d8d8"/>
<text x="1239.91" y="376.40" font-size="17.15" fill="#dcdcdc" >-2</text>
<rect x="1260.0" y="431.10" width="147.5" height="1.8" fill="#9a9a9a"/>
<rect x="1253.5" y="431.20" width="6.5" height="1.6" fill="#d8d8d8"/>
<text x="1239.55" y="439.00" font-size="17.15" fill="#dcdcdc" >-4</text>
<rect x="1253.5" y="492.60" width="6.5" height="1.6" fill="#d8d8d8"/>
<text x="1239.80" y="500.40" font-size="17.15" fill="#dcdcdc" >-6</text>
<rect x="1259.2" y="493.4" width="1.6" height="6" fill="#d8d8d8"/><rect x="1406.7" y="493.4" width="1.6" height="6" fill="#d8d8d8"/>
<text x="1318.63" y="512.00" font-size="17.44" fill="#dcdcdc" >100</text>
<rect x="1274.2" y="179.6" width="37.8" height="126.4" fill="url(#gBR)" stroke="#000" stroke-width="1.5"/>
<rect x="1312.8" y="306.0" width="38" height="34.9" fill="url(#gBG)" stroke="#000" stroke-width="1.5"/>
<rect x="1351.8" y="306.0" width="38" height="40.2" fill="url(#gBB)" stroke="#000" stroke-width="1.5"/>
<text x="1608.21" y="113.60" font-size="17.73" fill="#dcdcdc" textLength="116.80" lengthAdjust="spacingAndGlyphs" >Gamma Log/Log</text>
<rect x="1469.6" y="120.0" width="421.10" height="366.30" fill="#232323"/><rect x="1469.6" y="120.0" width="421.10" height="366.30" fill="none" stroke="#9a9a9a" stroke-width="1.8"/>
<rect x="1463.2" y="118.90" width="6.5" height="1.6" fill="#d8d8d8"/>
<text x="1440.90" y="126.70" font-size="17.15" fill="#dcdcdc" >2.8</text>
<rect x="1469.6" y="193.20" width="421.1" height="1.8" fill="#9a9a9a"/>
<rect x="1463.2" y="193.30" width="6.5" height="1.6" fill="#d8d8d8"/>
<text x="1440.91" y="201.10" font-size="17.15" fill="#dcdcdc" >2.6</text>
<rect x="1469.6" y="265.90" width="421.1" height="1.8" fill="#9a9a9a"/>
<rect x="1463.2" y="266.00" width="6.5" height="1.6" fill="#d8d8d8"/>
<text x="1440.66" y="273.80" font-size="17.15" fill="#dcdcdc" >2.4</text>
<rect x="1469.6" y="339.50" width="421.1" height="1.8" fill="#9a9a9a"/>
<rect x="1463.2" y="339.60" width="6.5" height="1.6" fill="#d8d8d8"/>
<text x="1441.02" y="347.40" font-size="17.15" fill="#dcdcdc" >2.2</text>
<rect x="1469.6" y="413.90" width="421.1" height="1.8" fill="#9a9a9a"/>
<rect x="1463.2" y="414.00" width="6.5" height="1.6" fill="#d8d8d8"/>
<text x="1455.32" y="421.80" font-size="17.15" fill="#dcdcdc" >2</text>
<rect x="1463.2" y="485.50" width="6.5" height="1.6" fill="#d8d8d8"/>
<text x="1440.90" y="493.30" font-size="17.15" fill="#dcdcdc" >1.8</text>
<rect x="1468.80" y="486.3" width="1.6" height="6" fill="#d8d8d8"/>
<text x="1464.75" y="512.00" font-size="17.44" fill="#dcdcdc" >0</text>
<rect x="1553.02" y="486.3" width="1.6" height="6" fill="#d8d8d8"/>
<text x="1544.02" y="512.00" font-size="17.44" fill="#dcdcdc" >20</text>
<rect x="1637.24" y="486.3" width="1.6" height="6" fill="#d8d8d8"/>
<text x="1628.48" y="512.00" font-size="17.44" fill="#dcdcdc" >40</text>
<rect x="1721.46" y="486.3" width="1.6" height="6" fill="#d8d8d8"/>
<text x="1712.46" y="512.00" font-size="17.44" fill="#dcdcdc" >60</text>
<rect x="1805.68" y="486.3" width="1.6" height="6" fill="#d8d8d8"/>
<text x="1796.74" y="512.00" font-size="17.44" fill="#dcdcdc" >80</text>
<rect x="1889.90" y="486.3" width="1.6" height="6" fill="#d8d8d8"/>
<text x="1875.83" y="512.00" font-size="17.44" fill="#dcdcdc" >100</text>
<g clip-path="url(#cpG)"><polyline points="1507.1,508.3 1511.7,464.4 1553.8,404.8 1595.9,360.9 1638.0,340.3 1680.2,322.6 1722.3,308.6 1764.4,280.7 1806.5,284.8 1848.6,264.2 1890.7,312.4" fill="none" stroke="#8a8a8a" stroke-width="3" stroke-linejoin="round"/>
<polyline points="1484.8,501.0 1485.9,488.8 1487.1,482.0 1488.3,477.4 1489.4,472.7 1490.6,467.6 1491.8,462.4 1493.0,457.2 1494.1,452.1 1495.3,447.4 1496.5,443.0 1497.6,439.2 1498.8,435.7 1500.0,432.4 1501.1,429.2 1502.3,426.2 1503.5,423.3 1504.7,420.7 1505.8,418.3 1507.0,416.0 1508.2,413.9 1509.3,412.0 1510.5,410.2 1511.7,408.5 1512.9,406.9 1514.0,405.4 1515.2,403.9 1516.4,402.5 1517.5,401.0 1518.7,399.6 1519.9,398.2 1521.0,396.8 1522.2,395.4 1523.4,394.1 1524.6,392.9 1525.7,391.6 1526.9,390.4 1528.1,389.2 1529.2,388.1 1530.4,387.0 1531.6,385.9 1532.8,384.8 1533.9,383.8 1535.1,382.8 1536.3,381.8 1537.4,380.8 1538.6,379.8 1539.8,378.9 1540.9,378.0 1542.1,377.1 1543.3,376.2 1544.5,375.3 1545.6,374.5 1546.8,373.7 1548.0,372.9 1549.1,372.1 1550.3,371.3 1551.5,370.5 1552.6,369.8 1553.8,369.0 1555.9,367.8 1561.6,364.5 1567.3,361.5 1572.9,358.7 1578.6,356.1 1584.3,353.6 1590.0,351.3 1595.6,349.0 1601.3,347.0 1607.0,345.1 1612.7,343.4 1618.3,341.8 1624.0,340.2 1629.7,338.8 1635.4,337.4 1641.0,336.0 1646.7,334.7 1652.4,333.4 1658.1,332.2 1663.7,331.0 1669.4,329.9 1675.1,328.9 1680.8,328.0 1686.4,327.1 1692.1,326.4 1697.8,325.7 1703.5,325.0 1709.1,324.4 1714.8,323.8 1720.5,323.2 1726.1,322.6 1731.8,322.0 1737.5,321.4 1743.2,320.9 1748.8,320.4 1754.5,319.9 1760.2,319.4 1765.9,318.9 1771.5,318.4 1777.2,317.9 1782.9,317.4 1788.6,316.9 1794.2,316.4 1799.9,316.0 1805.6,315.6 1811.3,315.3 1816.9,315.0 1822.6,314.8 1828.3,314.6 1834.0,314.3 1839.6,314.1 1845.3,313.8 1851.0,313.6 1856.7,313.3 1862.3,313.0 1868.0,312.7 1873.7,312.5 1879.4,312.2 1885.0,311.9 1890.7,311.6" fill="none" stroke="#ffff00" stroke-width="3" stroke-linejoin="round"/></g>
<text x="241.44" y="560.20" font-size="35.76" fill="#f2f2f2" textLength="229.78" lengthAdjust="spacingAndGlyphs" >Avg dE2000: 2.1</text>
<text x="678.44" y="560.20" font-size="35.76" fill="#f2f2f2" textLength="201.32" lengthAdjust="spacingAndGlyphs" >Avg CCT: 6364</text>
<text x="1064.87" y="560.20" font-size="35.76" fill="#f2f2f2" textLength="312.75" lengthAdjust="spacingAndGlyphs" >Contrast Ratio: 38502</text>
<text x="1499.14" y="560.20" font-size="35.76" fill="#f2f2f2" textLength="335.54" lengthAdjust="spacingAndGlyphs" >Average Gamma: 2.208</text>
<rect x="150.5" y="582.8" width="1769.5" height="151.4" fill="#000000"/>
<rect x="251" y="582.8" width="1" height="151.4" fill="#0a0a0a"/>
<g transform="translate(265.3,635.8) rotate(-90)"><text x="-0.03" y="0.00" font-size="13.08" fill="#e8e8e8" textLength="40.61" lengthAdjust="spacingAndGlyphs" >Actual</text></g>
<g transform="translate(265.3,702.0) rotate(-90)"><text x="-0.32" y="0.00" font-size="13.08" fill="#e8e8e8" textLength="40.62" lengthAdjust="spacingAndGlyphs" >Target</text></g>
<rect x="275.3" y="590.1" width="128.1" height="58.9" fill="#000000"/>
<rect x="275.3" y="649" width="128.1" height="58.8" fill="#000000"/>
<rect x="276.0" y="590.8" width="126.7" height="116.4" fill="none" stroke="#f4f4f4" stroke-width="1.5"/>
<text x="335.85" y="724.80" font-size="13.98" fill="#f0f0f0" font-family='"Liberation Serif", serif' >0</text>
<rect x="424.3" y="590.1" width="128.1" height="58.9" fill="#222222"/>
<rect x="424.3" y="649" width="128.1" height="58.8" fill="#1e1e1e"/>
<rect x="425.0" y="590.8" width="126.7" height="116.4" fill="none" stroke="#f4f4f4" stroke-width="1.5"/>
<text x="481.05" y="724.80" font-size="13.98" fill="#f0f0f0" font-family='"Liberation Serif", serif' >10</text>
<rect x="573.4" y="590.1" width="128.1" height="58.9" fill="#393738"/>
<rect x="573.4" y="649" width="128.1" height="58.8" fill="#333333"/>
<rect x="574.1" y="590.8" width="126.7" height="116.4" fill="none" stroke="#f4f4f4" stroke-width="1.5"/>
<text x="630.40" y="724.80" font-size="13.98" fill="#f0f0f0" font-family='"Liberation Serif", serif' >20</text>
<rect x="722.4" y="590.1" width="128.1" height="58.9" fill="#504e4f"/>
<rect x="722.4" y="649" width="128.1" height="58.8" fill="#4d4d4d"/>
<rect x="723.1" y="590.8" width="126.7" height="116.4" fill="none" stroke="#f4f4f4" stroke-width="1.5"/>
<text x="779.41" y="724.80" font-size="13.98" fill="#f0f0f0" font-family='"Liberation Serif", serif' >30</text>
<rect x="871.5" y="590.1" width="128.1" height="58.9" fill="#676566"/>
<rect x="871.5" y="649" width="128.1" height="58.8" fill="#666666"/>
<rect x="872.2" y="590.8" width="126.7" height="116.4" fill="none" stroke="#f4f4f4" stroke-width="1.5"/>
<text x="928.65" y="724.80" font-size="13.98" fill="#f0f0f0" font-family='"Liberation Serif", serif' >40</text>
<rect x="1020.5" y="590.1" width="128.1" height="58.9" fill="#807e7f"/>
<rect x="1020.5" y="649" width="128.1" height="58.8" fill="#808080"/>
<rect x="1021.2" y="590.8" width="126.7" height="116.4" fill="none" stroke="#f4f4f4" stroke-width="1.5"/>
<text x="1077.42" y="724.80" font-size="13.98" fill="#f0f0f0" font-family='"Liberation Serif", serif' >50</text>
<rect x="1169.5" y="590.1" width="128.1" height="58.9" fill="#9a9899"/>
<rect x="1169.5" y="649" width="128.1" height="58.8" fill="#999999"/>
<rect x="1170.2" y="590.8" width="126.7" height="116.4" fill="none" stroke="#f4f4f4" stroke-width="1.5"/>
<text x="1226.56" y="724.80" font-size="13.98" fill="#f0f0f0" font-family='"Liberation Serif", serif' >60</text>
<rect x="1318.6" y="590.1" width="128.1" height="58.9" fill="#b3aeae"/>
<rect x="1318.6" y="649" width="128.1" height="58.8" fill="#b3b3b3"/>
<rect x="1319.3" y="590.8" width="126.7" height="116.4" fill="none" stroke="#f4f4f4" stroke-width="1.5"/>
<text x="1375.44" y="724.80" font-size="13.98" fill="#f0f0f0" font-family='"Liberation Serif", serif' >70</text>
<rect x="1467.6" y="590.1" width="128.1" height="58.9" fill="#cdc9ca"/>
<rect x="1467.6" y="649" width="128.1" height="58.8" fill="#cccccc"/>
<rect x="1468.3" y="590.8" width="126.7" height="116.4" fill="none" stroke="#f4f4f4" stroke-width="1.5"/>
<text x="1524.68" y="724.80" font-size="13.98" fill="#f0f0f0" font-family='"Liberation Serif", serif' >80</text>
<rect x="1616.7" y="590.1" width="128.1" height="58.9" fill="#e6e5e4"/>
<rect x="1616.7" y="649" width="128.1" height="58.8" fill="#e6e6e6"/>
<rect x="1617.4" y="590.8" width="126.7" height="116.4" fill="none" stroke="#f4f4f4" stroke-width="1.5"/>
<text x="1673.76" y="724.80" font-size="13.98" fill="#f0f0f0" font-family='"Liberation Serif", serif' >90</text>
<rect x="1765.7" y="590.1" width="128.1" height="58.9" fill="#fffcfb"/>
<rect x="1765.7" y="649" width="128.1" height="58.8" fill="#fafbfc"/>
<rect x="1766.4" y="590.8" width="126.7" height="116.4" fill="none" stroke="#f4f4f4" stroke-width="1.5"/>
<text x="1818.91" y="724.80" font-size="13.98" fill="#f0f0f0" font-family='"Liberation Serif", serif' >100</text>
<text x="172.08" y="811.50" font-size="33.87" fill="#f2f2f2" textLength="234.69" lengthAdjust="spacingAndGlyphs" >Current Reading</text>
<text x="173.40" y="861.20" font-size="28.05" fill="#f2f2f2" textLength="108.65" lengthAdjust="spacingAndGlyphs" >x: 0.3159</text>
<text x="331.33" y="861.20" font-size="28.05" fill="#f2f2f2" textLength="109.60" lengthAdjust="spacingAndGlyphs" >y: 0.3292</text>
<text x="171.91" y="900.40" font-size="28.05" fill="#f2f2f2" textLength="74.38" lengthAdjust="spacingAndGlyphs" >u': 0.2</text>
<text x="331.31" y="900.40" font-size="28.05" fill="#f2f2f2" textLength="116.58" lengthAdjust="spacingAndGlyphs" >v': 0.4689</text>
<text x="172.52" y="939.20" font-size="28.05" fill="#f2f2f2" textLength="200.30" lengthAdjust="spacingAndGlyphs" >cd/m²: 342.7846</text>
<text x="172.93" y="978.60" font-size="28.05" fill="#f2f2f2" textLength="163.89" lengthAdjust="spacingAndGlyphs" >ΔE 2000: 2.39</text>
<text x="611.54" y="772.40" font-size="15.70" fill="#dcdcdc" textLength="81.08" lengthAdjust="spacingAndGlyphs" >CIE 1931 xy</text>
<rect x="536.5" y="778.40" width="268.1" height="9.48" fill="url(#gC0)"/>
<rect x="536.5" y="786.38" width="268.1" height="9.48" fill="url(#gC1)"/>
<rect x="536.5" y="794.36" width="268.1" height="9.48" fill="url(#gC2)"/>
<rect x="536.5" y="802.34" width="268.1" height="9.48" fill="url(#gC3)"/>
<rect x="536.5" y="810.32" width="268.1" height="9.48" fill="url(#gC4)"/>
<rect x="536.5" y="818.30" width="268.1" height="9.48" fill="url(#gC5)"/>
<rect x="536.5" y="826.27" width="268.1" height="9.48" fill="url(#gC6)"/>
<rect x="536.5" y="834.25" width="268.1" height="9.48" fill="url(#gC7)"/>
<rect x="536.5" y="842.23" width="268.1" height="9.48" fill="url(#gC8)"/>
<rect x="536.5" y="850.21" width="268.1" height="9.48" fill="url(#gC9)"/>
<rect x="536.5" y="858.19" width="268.1" height="9.48" fill="url(#gC10)"/>
<rect x="536.5" y="866.17" width="268.1" height="9.48" fill="url(#gC11)"/>
<rect x="536.5" y="874.15" width="268.1" height="9.48" fill="url(#gC12)"/>
<rect x="536.5" y="882.13" width="268.1" height="9.48" fill="url(#gC13)"/>
<rect x="536.5" y="890.11" width="268.1" height="9.48" fill="url(#gC14)"/>
<rect x="536.5" y="898.09" width="268.1" height="9.48" fill="url(#gC15)"/>
<rect x="536.5" y="906.07" width="268.1" height="9.48" fill="url(#gC16)"/>
<rect x="536.5" y="914.05" width="268.1" height="9.48" fill="url(#gC17)"/>
<rect x="536.5" y="922.02" width="268.1" height="9.48" fill="url(#gC18)"/>
<rect x="536.5" y="930.00" width="268.1" height="9.48" fill="url(#gC19)"/>
<rect x="536.5" y="937.98" width="268.1" height="9.48" fill="url(#gC20)"/>
<rect x="536.5" y="945.96" width="268.1" height="9.48" fill="url(#gC21)"/>
<rect x="536.5" y="953.94" width="268.1" height="9.48" fill="url(#gC22)"/>
<rect x="536.5" y="961.92" width="268.1" height="9.48" fill="url(#gC23)"/>
<rect x="536.5" y="778.4" width="268.1" height="191.5" fill="none" stroke="#a0a0a0" stroke-width="1.6"/>
<g clip-path="url(#cpC)"><path d="M569.0 970.8 C600 947, 640 918, 675.8 891.8 C 712 866, 760 836, 806 808.3" fill="none" stroke="#000" stroke-width="3"/></g>
<rect x="530.5" y="832.8" width="6" height="1.4" fill="#d8d8d8"/>
<text x="499.37" y="839.40" font-size="17.15" fill="#dcdcdc" textLength="31.40" lengthAdjust="spacingAndGlyphs" >0.34</text>
<rect x="530.5" y="910.3" width="6" height="1.4" fill="#d8d8d8"/>
<text x="499.36" y="916.90" font-size="17.15" fill="#dcdcdc" textLength="31.76" lengthAdjust="spacingAndGlyphs" >0.32</text>
<rect x="548.1" y="969.9" width="1.4" height="6" fill="#d8d8d8"/>
<text x="531.62" y="995.80" font-size="17.73" fill="#dcdcdc" >0.29</text>
<rect x="601.6" y="969.9" width="1.4" height="6" fill="#d8d8d8"/>
<text x="589.99" y="995.80" font-size="17.73" fill="#dcdcdc" >0.3</text>
<rect x="655.0" y="969.9" width="1.4" height="6" fill="#d8d8d8"/>
<text x="638.57" y="995.80" font-size="17.73" fill="#dcdcdc" >0.31</text>
<rect x="708.5" y="969.9" width="1.4" height="6" fill="#d8d8d8"/>
<text x="692.05" y="995.80" font-size="17.73" fill="#dcdcdc" >0.32</text>
<rect x="762.0" y="969.9" width="1.4" height="6" fill="#d8d8d8"/>
<text x="745.47" y="995.80" font-size="17.73" fill="#dcdcdc" >0.33</text>
<rect x="663.2" y="865.6" width="14" height="15" fill="#ffffff" stroke="#000" stroke-width="1.6"/>
<circle cx="692.5" cy="876.8" r="4.6" fill="#3a3a3a" stroke="#000" stroke-width="0.9"/>
<circle cx="678.6" cy="883.6" r="4.6" fill="#6a6a6a" stroke="#000" stroke-width="0.9"/>
<circle cx="683.2" cy="882.2" r="4.6" fill="#8a8a8a" stroke="#000" stroke-width="0.9"/>
<circle cx="686.0" cy="879.0" r="4.6" fill="#b0b0b0" stroke="#000" stroke-width="0.9"/>
<circle cx="690.0" cy="878.0" r="4.6" fill="#c8c8c8" stroke="#000" stroke-width="0.9"/>
<circle cx="680.6" cy="874.4" r="4.6" fill="#e0e0e0" stroke="#000" stroke-width="0.9"/>
<circle cx="687.4" cy="872.6" r="4.6" fill="#ffffff" stroke="#000" stroke-width="0.9"/>
<rect x="816.1" y="744.9" width="901.1" height="14.8" fill="#2a2a2a"/>
<rect x="816.1" y="759.7" width="901.1" height="14.6" fill="#161616"/>
<rect x="816.1" y="744.9" width="11.1" height="29.4" fill="#000"/>
<text x="940.88" y="765.30" font-size="15.41" fill="#f0f0f0" textLength="7.37" lengthAdjust="spacingAndGlyphs" >0</text>
<text x="1011.26" y="765.30" font-size="15.41" fill="#f0f0f0" textLength="14.74" lengthAdjust="spacingAndGlyphs" >10</text>
<text x="1082.47" y="765.30" font-size="15.41" fill="#f0f0f0" textLength="14.74" lengthAdjust="spacingAndGlyphs" >20</text>
<text x="1153.51" y="765.30" font-size="15.41" fill="#f0f0f0" textLength="14.74" lengthAdjust="spacingAndGlyphs" >30</text>
<text x="1224.58" y="765.30" font-size="15.41" fill="#f0f0f0" textLength="14.74" lengthAdjust="spacingAndGlyphs" >40</text>
<text x="1295.22" y="765.30" font-size="15.41" fill="#f0f0f0" textLength="14.74" lengthAdjust="spacingAndGlyphs" >50</text>
<text x="1365.95" y="765.30" font-size="15.41" fill="#f0f0f0" textLength="14.74" lengthAdjust="spacingAndGlyphs" >60</text>
<text x="1436.81" y="765.30" font-size="15.41" fill="#f0f0f0" textLength="14.74" lengthAdjust="spacingAndGlyphs" >70</text>
<text x="1507.78" y="765.30" font-size="15.41" fill="#f0f0f0" textLength="14.74" lengthAdjust="spacingAndGlyphs" >80</text>
<text x="1578.61" y="765.30" font-size="15.41" fill="#f0f0f0" textLength="14.74" lengthAdjust="spacingAndGlyphs" >90</text>
<text x="1649.09" y="765.30" font-size="15.41" fill="#f0f0f0" textLength="22.11" lengthAdjust="spacingAndGlyphs" >100</text>
<rect x="816.1" y="774.30" width="901.1" height="26.91" fill="#3d3d3d"/>
<rect x="816.1" y="774.30" width="11.1" height="26.91" fill="#1e1e1e"/>
<text x="830.76" y="794.50" font-size="16.57" fill="#f0f0f0" textLength="46.63" lengthAdjust="spacingAndGlyphs" >x: CIE31</text>
<text x="940.88" y="794.50" font-size="16.57" fill="#f0f0f0" textLength="40.95" lengthAdjust="spacingAndGlyphs" >0.0000</text>
<text x="1011.75" y="794.50" font-size="16.57" fill="#f0f0f0" textLength="40.95" lengthAdjust="spacingAndGlyphs" >0.3161</text>
<text x="1082.62" y="794.50" font-size="16.57" fill="#f0f0f0" textLength="40.95" lengthAdjust="spacingAndGlyphs" >0.3168</text>
<text x="1153.49" y="794.50" font-size="16.57" fill="#f0f0f0" textLength="40.95" lengthAdjust="spacingAndGlyphs" >0.3148</text>
<text x="1224.36" y="794.50" font-size="16.57" fill="#f0f0f0" textLength="40.95" lengthAdjust="spacingAndGlyphs" >0.3158</text>
<text x="1295.23" y="794.50" font-size="16.57" fill="#f0f0f0" textLength="40.95" lengthAdjust="spacingAndGlyphs" >0.3159</text>
<text x="1366.10" y="794.50" font-size="16.57" fill="#f0f0f0" textLength="40.95" lengthAdjust="spacingAndGlyphs" >0.3141</text>
<text x="1436.97" y="794.50" font-size="16.57" fill="#f0f0f0" textLength="40.95" lengthAdjust="spacingAndGlyphs" >0.3148</text>
<text x="1507.84" y="794.50" font-size="16.57" fill="#f0f0f0" textLength="40.95" lengthAdjust="spacingAndGlyphs" >0.3157</text>
<text x="1578.71" y="794.50" font-size="16.57" fill="#f0f0f0" textLength="40.95" lengthAdjust="spacingAndGlyphs" >0.3147</text>
<text x="1649.58" y="794.50" font-size="16.57" fill="#f0f0f0" textLength="40.95" lengthAdjust="spacingAndGlyphs" >0.3159</text>
<rect x="816.1" y="801.21" width="901.1" height="26.91" fill="#7b7b7b"/>
<rect x="816.1" y="801.21" width="11.1" height="26.91" fill="#1e1e1e"/>
<text x="830.87" y="821.41" font-size="16.57" fill="#f0f0f0" textLength="46.52" lengthAdjust="spacingAndGlyphs" >y: CIE31</text>
<text x="940.38" y="821.41" font-size="16.57" fill="#f0f0f0" textLength="40.95" lengthAdjust="spacingAndGlyphs" >1.0000</text>
<text x="1011.75" y="821.41" font-size="16.57" fill="#f0f0f0" textLength="40.95" lengthAdjust="spacingAndGlyphs" >0.3279</text>
<text x="1082.62" y="821.41" font-size="16.57" fill="#f0f0f0" textLength="40.95" lengthAdjust="spacingAndGlyphs" >0.3285</text>
<text x="1153.49" y="821.41" font-size="16.57" fill="#f0f0f0" textLength="40.95" lengthAdjust="spacingAndGlyphs" >0.3262</text>
<text x="1224.36" y="821.41" font-size="16.57" fill="#f0f0f0" textLength="40.95" lengthAdjust="spacingAndGlyphs" >0.3269</text>
<text x="1295.23" y="821.41" font-size="16.57" fill="#f0f0f0" textLength="40.95" lengthAdjust="spacingAndGlyphs" >0.3284</text>
<text x="1366.10" y="821.41" font-size="16.57" fill="#f0f0f0" textLength="40.95" lengthAdjust="spacingAndGlyphs" >0.3261</text>
<text x="1436.97" y="821.41" font-size="16.57" fill="#f0f0f0" textLength="40.95" lengthAdjust="spacingAndGlyphs" >0.3266</text>
<text x="1507.84" y="821.41" font-size="16.57" fill="#f0f0f0" textLength="40.95" lengthAdjust="spacingAndGlyphs" >0.3280</text>
<text x="1578.71" y="821.41" font-size="16.57" fill="#f0f0f0" textLength="40.95" lengthAdjust="spacingAndGlyphs" >0.3286</text>
<text x="1649.58" y="821.41" font-size="16.57" fill="#f0f0f0" textLength="40.95" lengthAdjust="spacingAndGlyphs" >0.3292</text>
<rect x="816.1" y="828.12" width="901.1" height="26.91" fill="#3d3d3d"/>
<rect x="816.1" y="828.12" width="11.1" height="26.91" fill="#1e1e1e"/>
<text x="830.54" y="848.33" font-size="16.57" fill="#f0f0f0" >Y</text>
<text x="940.88" y="848.33" font-size="16.57" fill="#f0f0f0" textLength="40.95" lengthAdjust="spacingAndGlyphs" >0.0089</text>
<text x="1011.96" y="848.33" font-size="16.57" fill="#f0f0f0" textLength="40.95" lengthAdjust="spacingAndGlyphs" >4.9094</text>
<text x="1082.12" y="848.33" font-size="16.57" fill="#f0f0f0" textLength="48.39" lengthAdjust="spacingAndGlyphs" >13.2269</text>
<text x="1153.34" y="848.33" font-size="16.57" fill="#f0f0f0" textLength="48.39" lengthAdjust="spacingAndGlyphs" >25.6315</text>
<text x="1224.57" y="848.33" font-size="16.57" fill="#f0f0f0" textLength="48.39" lengthAdjust="spacingAndGlyphs" >45.7197</text>
<text x="1295.06" y="848.33" font-size="16.57" fill="#f0f0f0" textLength="48.39" lengthAdjust="spacingAndGlyphs" >72.8561</text>
<text x="1365.60" y="848.33" font-size="16.57" fill="#f0f0f0" textLength="55.84" lengthAdjust="spacingAndGlyphs" >106.6796</text>
<text x="1436.47" y="848.33" font-size="16.57" fill="#f0f0f0" textLength="55.84" lengthAdjust="spacingAndGlyphs" >146.6866</text>
<text x="1507.69" y="848.33" font-size="16.57" fill="#f0f0f0" textLength="55.84" lengthAdjust="spacingAndGlyphs" >202.8983</text>
<text x="1578.56" y="848.33" font-size="16.57" fill="#f0f0f0" textLength="55.84" lengthAdjust="spacingAndGlyphs" >267.4186</text>
<text x="1649.59" y="848.33" font-size="16.57" fill="#f0f0f0" textLength="55.84" lengthAdjust="spacingAndGlyphs" >342.7846</text>
<rect x="816.1" y="855.04" width="901.1" height="26.91" fill="#7b7b7b"/>
<rect x="816.1" y="855.04" width="11.1" height="26.91" fill="#1e1e1e"/>
<text x="830.61" y="875.24" font-size="16.57" fill="#f0f0f0" textLength="49.68" lengthAdjust="spacingAndGlyphs" >Target Y</text>
<text x="940.88" y="875.24" font-size="16.57" fill="#f0f0f0" textLength="40.95" lengthAdjust="spacingAndGlyphs" >0.0089</text>
<text x="1011.76" y="875.24" font-size="16.57" fill="#f0f0f0" textLength="40.95" lengthAdjust="spacingAndGlyphs" >3.5497</text>
<text x="1082.12" y="875.24" font-size="16.57" fill="#f0f0f0" textLength="48.39" lengthAdjust="spacingAndGlyphs" >11.3564</text>
<text x="1153.34" y="875.24" font-size="16.57" fill="#f0f0f0" textLength="48.39" lengthAdjust="spacingAndGlyphs" >24.7819</text>
<text x="1224.57" y="875.24" font-size="16.57" fill="#f0f0f0" textLength="48.39" lengthAdjust="spacingAndGlyphs" >45.5529</text>
<text x="1295.06" y="875.24" font-size="16.57" fill="#f0f0f0" textLength="48.39" lengthAdjust="spacingAndGlyphs" >74.0006</text>
<text x="1365.60" y="875.24" font-size="16.57" fill="#f0f0f0" textLength="55.84" lengthAdjust="spacingAndGlyphs" >109.1990</text>
<text x="1436.47" y="875.24" font-size="16.57" fill="#f0f0f0" textLength="55.84" lengthAdjust="spacingAndGlyphs" >152.6130</text>
<text x="1507.69" y="875.24" font-size="16.57" fill="#f0f0f0" textLength="55.84" lengthAdjust="spacingAndGlyphs" >206.9862</text>
<text x="1578.56" y="875.24" font-size="16.57" fill="#f0f0f0" textLength="55.84" lengthAdjust="spacingAndGlyphs" >271.2466</text>
<text x="1649.59" y="875.24" font-size="16.57" fill="#f0f0f0" textLength="55.84" lengthAdjust="spacingAndGlyphs" >342.7846</text>
<rect x="816.1" y="881.95" width="901.1" height="26.91" fill="#3d3d3d"/>
<rect x="816.1" y="881.95" width="11.1" height="26.91" fill="#1e1e1e"/>
<text x="830.21" y="902.15" font-size="16.57" fill="#f0f0f0" textLength="102.78" lengthAdjust="spacingAndGlyphs" >Gamma Log/Log</text>
<text x="940.38" y="902.15" font-size="16.57" fill="#f0f0f0" textLength="40.95" lengthAdjust="spacingAndGlyphs" >1.1181</text>
<text x="1011.25" y="902.15" font-size="16.57" fill="#f0f0f0" textLength="40.95" lengthAdjust="spacingAndGlyphs" >1.8597</text>
<text x="1082.47" y="902.15" font-size="16.57" fill="#f0f0f0" textLength="40.95" lengthAdjust="spacingAndGlyphs" >2.0224</text>
<text x="1153.34" y="902.15" font-size="16.57" fill="#f0f0f0" textLength="40.95" lengthAdjust="spacingAndGlyphs" >2.1423</text>
<text x="1224.21" y="902.15" font-size="16.57" fill="#f0f0f0" textLength="40.95" lengthAdjust="spacingAndGlyphs" >2.1986</text>
<text x="1295.08" y="902.15" font-size="16.57" fill="#f0f0f0" textLength="40.95" lengthAdjust="spacingAndGlyphs" >2.2469</text>
<text x="1365.95" y="902.15" font-size="16.57" fill="#f0f0f0" textLength="40.95" lengthAdjust="spacingAndGlyphs" >2.2851</text>
<text x="1436.82" y="902.15" font-size="16.57" fill="#f0f0f0" textLength="40.95" lengthAdjust="spacingAndGlyphs" >2.3612</text>
<text x="1507.69" y="902.15" font-size="16.57" fill="#f0f0f0" textLength="40.95" lengthAdjust="spacingAndGlyphs" >2.3500</text>
<text x="1578.56" y="902.15" font-size="16.57" fill="#f0f0f0" textLength="40.95" lengthAdjust="spacingAndGlyphs" >2.4063</text>
<text x="1649.43" y="902.15" font-size="16.57" fill="#f0f0f0" textLength="40.95" lengthAdjust="spacingAndGlyphs" >2.2748</text>
<rect x="816.1" y="908.86" width="901.1" height="26.91" fill="#7b7b7b"/>
<rect x="816.1" y="908.86" width="11.1" height="26.91" fill="#1e1e1e"/>
<text x="830.30" y="929.06" font-size="16.57" fill="#f0f0f0" textLength="24.17" lengthAdjust="spacingAndGlyphs" >CCT</text>
<text x="940.82" y="929.06" font-size="16.57" fill="#f0f0f0" textLength="63.28" lengthAdjust="spacingAndGlyphs" >8931.0000</text>
<text x="1011.59" y="929.06" font-size="16.57" fill="#f0f0f0" textLength="63.28" lengthAdjust="spacingAndGlyphs" >6325.0000</text>
<text x="1082.46" y="929.06" font-size="16.57" fill="#f0f0f0" textLength="63.28" lengthAdjust="spacingAndGlyphs" >6288.0000</text>
<text x="1153.33" y="929.06" font-size="16.57" fill="#f0f0f0" textLength="63.28" lengthAdjust="spacingAndGlyphs" >6407.0000</text>
<text x="1224.20" y="929.06" font-size="16.57" fill="#f0f0f0" textLength="63.28" lengthAdjust="spacingAndGlyphs" >6352.0000</text>
<text x="1295.07" y="929.06" font-size="16.57" fill="#f0f0f0" textLength="63.28" lengthAdjust="spacingAndGlyphs" >6335.0000</text>
<text x="1365.94" y="929.06" font-size="16.57" fill="#f0f0f0" textLength="63.28" lengthAdjust="spacingAndGlyphs" >6448.0000</text>
<text x="1436.81" y="929.06" font-size="16.57" fill="#f0f0f0" textLength="63.28" lengthAdjust="spacingAndGlyphs" >6403.0000</text>
<text x="1507.68" y="929.06" font-size="16.57" fill="#f0f0f0" textLength="63.28" lengthAdjust="spacingAndGlyphs" >6349.0000</text>
<text x="1578.55" y="929.06" font-size="16.57" fill="#f0f0f0" textLength="63.28" lengthAdjust="spacingAndGlyphs" >6399.0000</text>
<text x="1649.42" y="929.06" font-size="16.57" fill="#f0f0f0" textLength="63.28" lengthAdjust="spacingAndGlyphs" >6329.0000</text>
<rect x="816.1" y="935.77" width="901.1" height="26.91" fill="#3d3d3d"/>
<rect x="816.1" y="935.77" width="11.1" height="26.91" fill="#1e1e1e"/>
<text x="830.51" y="955.98" font-size="16.57" fill="#f0f0f0" textLength="50.51" lengthAdjust="spacingAndGlyphs" >ΔE 2000</text>
<text x="940.88" y="955.98" font-size="16.57" fill="#f0f0f0" textLength="40.95" lengthAdjust="spacingAndGlyphs" >0.1564</text>
<text x="1011.60" y="955.98" font-size="16.57" fill="#f0f0f0" textLength="40.95" lengthAdjust="spacingAndGlyphs" >2.0116</text>
<text x="1082.12" y="955.98" font-size="16.57" fill="#f0f0f0" textLength="40.95" lengthAdjust="spacingAndGlyphs" >1.8298</text>
<text x="1152.99" y="955.98" font-size="16.57" fill="#f0f0f0" textLength="40.95" lengthAdjust="spacingAndGlyphs" >1.6402</text>
<text x="1223.86" y="955.98" font-size="16.57" fill="#f0f0f0" textLength="40.95" lengthAdjust="spacingAndGlyphs" >1.9958</text>
<text x="1294.73" y="955.98" font-size="16.57" fill="#f0f0f0" textLength="40.95" lengthAdjust="spacingAndGlyphs" >1.7659</text>
<text x="1365.95" y="955.98" font-size="16.57" fill="#f0f0f0" textLength="40.95" lengthAdjust="spacingAndGlyphs" >2.2495</text>
<text x="1436.82" y="955.98" font-size="16.57" fill="#f0f0f0" textLength="40.95" lengthAdjust="spacingAndGlyphs" >2.6711</text>
<text x="1507.69" y="955.98" font-size="16.57" fill="#f0f0f0" textLength="40.95" lengthAdjust="spacingAndGlyphs" >2.5313</text>
<text x="1578.21" y="955.98" font-size="16.57" fill="#f0f0f0" textLength="40.95" lengthAdjust="spacingAndGlyphs" >1.7046</text>
<text x="1649.43" y="955.98" font-size="16.57" fill="#f0f0f0" textLength="40.95" lengthAdjust="spacingAndGlyphs" >2.3877</text>
<rect x="816.1" y="962.69" width="901.1" height="26.91" fill="#7b7b7b"/>
<rect x="816.1" y="962.69" width="11.1" height="26.91" fill="#1e1e1e"/>
<text x="830.37" y="982.89" font-size="16.57" fill="#f0f0f0" textLength="34.89" lengthAdjust="spacingAndGlyphs" >dEITP</text>
<text x="940.38" y="982.89" font-size="16.57" fill="#f0f0f0" textLength="48.39" lengthAdjust="spacingAndGlyphs" >17.6064</text>
<text x="1011.25" y="982.89" font-size="16.57" fill="#f0f0f0" textLength="48.39" lengthAdjust="spacingAndGlyphs" >16.1466</text>
<text x="1082.51" y="982.89" font-size="16.57" fill="#f0f0f0" textLength="40.95" lengthAdjust="spacingAndGlyphs" >9.2475</text>
<text x="1153.50" y="982.89" font-size="16.57" fill="#f0f0f0" textLength="40.95" lengthAdjust="spacingAndGlyphs" >3.0450</text>
<text x="1224.21" y="982.89" font-size="16.57" fill="#f0f0f0" textLength="40.95" lengthAdjust="spacingAndGlyphs" >2.5083</text>
<text x="1295.08" y="982.89" font-size="16.57" fill="#f0f0f0" textLength="40.95" lengthAdjust="spacingAndGlyphs" >2.4216</text>
<text x="1365.95" y="982.89" font-size="16.57" fill="#f0f0f0" textLength="40.95" lengthAdjust="spacingAndGlyphs" >2.5124</text>
<text x="1436.98" y="982.89" font-size="16.57" fill="#f0f0f0" textLength="40.95" lengthAdjust="spacingAndGlyphs" >3.6006</text>
<text x="1507.69" y="982.89" font-size="16.57" fill="#f0f0f0" textLength="40.95" lengthAdjust="spacingAndGlyphs" >2.7158</text>
<text x="1578.21" y="982.89" font-size="16.57" fill="#f0f0f0" textLength="40.95" lengthAdjust="spacingAndGlyphs" >1.7997</text>
<text x="1649.43" y="982.89" font-size="16.57" fill="#f0f0f0" textLength="40.95" lengthAdjust="spacingAndGlyphs" >2.1891</text>
<rect x="150" y="1010" width="1770" height="48" fill="url(#gBotBar)"/>
<rect x="151.0" y="1011.5" width="112" height="47" rx="2.5" fill="url(#gBot)"/>
<rect x="154.7" y="1015" width="104.8" height="27" rx="2.5" fill="#000000" stroke="#3a3a3a" stroke-width="0.8"/>
<text x="204.74" y="1053.30" font-size="8.14" fill="#2a2a2a" >0</text>
<rect x="265.1" y="1011.5" width="112" height="47" rx="2.5" fill="url(#gBot)"/>
<rect x="268.8" y="1015" width="104.8" height="27" rx="2.5" fill="#1a1a1a" stroke="#3a3a3a" stroke-width="0.8"/>
<text x="316.42" y="1053.30" font-size="8.14" fill="#2a2a2a" >10</text>
<rect x="379.2" y="1011.5" width="112" height="47" rx="2.5" fill="url(#gBot)"/>
<rect x="382.9" y="1015" width="104.8" height="27" rx="2.5" fill="#333333" stroke="#3a3a3a" stroke-width="0.8"/>
<text x="430.63" y="1053.30" font-size="8.14" fill="#2a2a2a" >20</text>
<rect x="493.3" y="1011.5" width="112" height="47" rx="2.5" fill="url(#gBot)"/>
<rect x="497.0" y="1015" width="104.8" height="27" rx="2.5" fill="#4d4d4d" stroke="#3a3a3a" stroke-width="0.8"/>
<text x="544.78" y="1053.30" font-size="8.14" fill="#2a2a2a" >30</text>
<rect x="607.4" y="1011.5" width="112" height="47" rx="2.5" fill="url(#gBot)"/>
<rect x="611.1" y="1015" width="104.8" height="27" rx="2.5" fill="#666666" stroke="#3a3a3a" stroke-width="0.8"/>
<text x="658.94" y="1053.30" font-size="8.14" fill="#2a2a2a" >40</text>
<rect x="721.5" y="1011.5" width="112" height="47" rx="2.5" fill="url(#gBot)"/>
<rect x="725.2" y="1015" width="104.8" height="27" rx="2.5" fill="#808080" stroke="#3a3a3a" stroke-width="0.8"/>
<text x="772.97" y="1053.30" font-size="8.14" fill="#2a2a2a" >50</text>
<rect x="835.6" y="1011.5" width="112" height="47" rx="2.5" fill="url(#gBot)"/>
<rect x="839.3" y="1015" width="104.8" height="27" rx="2.5" fill="#999999" stroke="#3a3a3a" stroke-width="0.8"/>
<text x="887.03" y="1053.30" font-size="8.14" fill="#2a2a2a" >60</text>
<rect x="949.7" y="1011.5" width="112" height="47" rx="2.5" fill="url(#gBot)"/>
<rect x="953.4" y="1015" width="104.8" height="27" rx="2.5" fill="#b3b3b3" stroke="#3a3a3a" stroke-width="0.8"/>
<text x="1001.12" y="1053.30" font-size="8.14" fill="#2a2a2a" >70</text>
<rect x="1063.8" y="1011.5" width="112" height="47" rx="2.5" fill="url(#gBot)"/>
<rect x="1067.5" y="1015" width="104.8" height="27" rx="2.5" fill="#cccccc" stroke="#3a3a3a" stroke-width="0.8"/>
<text x="1115.26" y="1053.30" font-size="8.14" fill="#2a2a2a" >80</text>
<rect x="1177.9" y="1011.5" width="112" height="47" rx="2.5" fill="url(#gBot)"/>
<rect x="1181.6" y="1015" width="104.8" height="27" rx="2.5" fill="#e6e6e6" stroke="#3a3a3a" stroke-width="0.8"/>
<text x="1229.34" y="1053.30" font-size="8.14" fill="#2a2a2a" >90</text>
<rect x="1292.0" y="1011.5" width="112" height="47" rx="2.5" fill="#1e1e1e"/>
<rect x="1295.7" y="1015" width="104.8" height="27" rx="2.5" fill="#ffffff"/>
<text x="1341.12" y="1053.30" font-size="8.14" fill="#ffffff" font-weight="bold" >100</text>
<rect x="1677.8" y="1026.3" width="35.2" height="31.7" rx="3" fill="#5e5e5e"/>
<rect x="1684.3" y="1032.8" width="21.5" height="19.5" rx="3" fill="#a6a6a6" stroke="#1a1a1a" stroke-width="1.6"/>
<rect x="1690.8" y="1036.7" width="9.8" height="9.7" fill="#000"/>
<rect x="1884" y="1011.5" width="36" height="22.5" rx="2" fill="#2c2c2c"/>
<circle cx="1902" cy="1029" r="5" fill="#3a3a3a"/>
<rect x="1715.0" y="1011.5" width="33.2" height="22.5" rx="2" fill="url(#gSm)"/>
<circle cx="1731.5" cy="1029" r="5" fill="#9a9a9a" opacity="0.7"/>
<rect x="1748.8" y="1011.5" width="33.2" height="22.5" rx="2" fill="url(#gSm)"/>
<circle cx="1765.3" cy="1029" r="5" fill="#9a9a9a" opacity="0.7"/>
<rect x="1782.6" y="1011.5" width="33.2" height="22.5" rx="2" fill="url(#gSm)"/>
<circle cx="1799.1" cy="1029" r="5" fill="#9a9a9a" opacity="0.7"/>
<rect x="1816.4" y="1011.5" width="33.2" height="22.5" rx="2" fill="url(#gSm)"/>
<circle cx="1832.9" cy="1029" r="5" fill="#9a9a9a" opacity="0.7"/>
<rect x="1850.2" y="1011.5" width="33.2" height="22.5" rx="2" fill="url(#gSm)"/>
<circle cx="1866.7" cy="1029" r="5" fill="#9a9a9a" opacity="0.7"/>
<rect x="1714.9" y="1034.7" width="101.6" height="23.3" rx="3" fill="url(#gNav)"/>
<rect x="1817.4" y="1034.7" width="102.6" height="23.3" rx="3" fill="url(#gNav)"/>
<circle cx="1737.7" cy="1045.8" r="7.2" fill="url(#gNC)"/><circle cx="1897.2" cy="1045.8" r="7.2" fill="url(#gNC)"/>
<path d="M1737.4 1042.6 L1734.4 1045.8 L1737.4 1049 M1740.6 1042.6 L1737.6 1045.8 L1740.6 1049" fill="none" stroke="#2a2a2a" stroke-width="1.1"/>
<path d="M1894.2 1042.6 L1897.2 1045.8 L1894.2 1049 M1897.4 1042.6 L1900.4 1045.8 L1897.4 1049" fill="none" stroke="#2a2a2a" stroke-width="1.1"/>
<text x="1756.48" y="1051.90" font-size="17.44" fill="#262626" textLength="38.50" lengthAdjust="spacingAndGlyphs" >Back</text>
<text x="1836.40" y="1051.90" font-size="17.44" fill="#262626" textLength="40.14" lengthAdjust="spacingAndGlyphs" >Next</text>
<g opacity="0.85"><path d="M1632.5 996.5 L1669.8 1004.8 L1671.2 1027.8 L1697.5 1032.4 L1656.6 1045.5 L1632.4 1032.8 Z" fill="none" stroke="#cfcfcf" stroke-width="6.4" stroke-linejoin="round"/><path d="M1632.5 996.5 L1669.8 1004.8 L1671.2 1027.8 L1697.5 1032.4 L1656.6 1045.5 L1632.4 1032.8 Z" fill="none" stroke="#8c252c" stroke-width="4.2" stroke-linejoin="round"/><path d="M1671.2 1028.5 L1641 1029.8" fill="none" stroke="#cfcfcf" stroke-width="2.6" stroke-linecap="round"/><path d="M1671.2 1028.5 L1641 1029.8" fill="none" stroke="#8c252c" stroke-width="1.2" stroke-linecap="round"/><path d="M1643 1009.6 L1654 1023.6 L1674 996.2" fill="none" stroke="#cfcfcf" stroke-width="4.6" stroke-linejoin="round" stroke-linecap="round"/><path d="M1643 1009.6 L1654 1023.6 L1674 996.2" fill="none" stroke="#262626" stroke-width="2.6" stroke-linejoin="round" stroke-linecap="round"/></g>
<g opacity="0.72"><text x="1673.46" y="1025.20" font-size="27.91" fill="#a02a34" font-weight="bold" textLength="150.38" lengthAdjust="spacingAndGlyphs" stroke="#d0d0d0" stroke-width="1.1" paint-order="stroke">NOTEBOOK</text><text x="1823.27" y="1025.20" font-size="27.91" fill="#1c1c1c" font-weight="bold" textLength="89.16" lengthAdjust="spacingAndGlyphs" stroke="#d0d0d0" stroke-width="1.1" paint-order="stroke">CHECK</text></g></svg></body></html>
